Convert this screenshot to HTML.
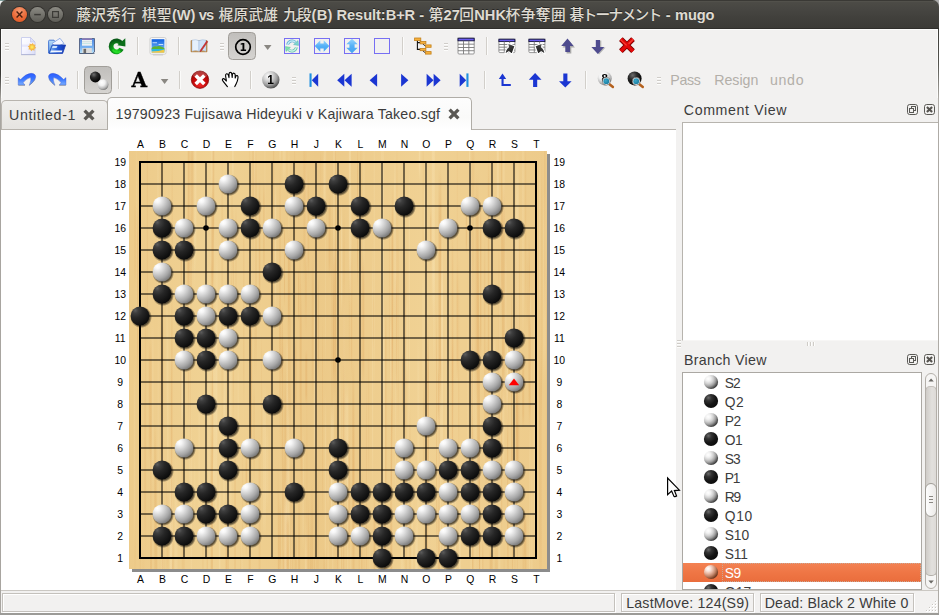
<!DOCTYPE html><html><head><meta charset="utf-8"><title>mugo</title><style>
*{box-sizing:border-box;margin:0;padding:0}
html,body{width:939px;height:615px;overflow:hidden;background:#f2f1f0}
body{font-family:"Liberation Sans","Noto Sans CJK JP",sans-serif;color:#3c3c3c;position:relative}
#win{position:absolute;left:0;top:0;width:939px;height:615px;overflow:hidden;background:#f2f1f0}
.abs{position:absolute}
.t{position:absolute;white-space:nowrap;line-height:1}
#title{position:absolute;left:0;top:0;width:939px;height:29px;background:linear-gradient(#3a3935 0,#3a3935 1px,#55544e 1px,#4c4b46 2.5px,#474642 9px,#403f3b 19px,#3c3b37 27.5px,#2f2e2b 28px,#2f2e2b 29px);border-radius:6.5px 6.5px 0 0}
#title .txt{position:absolute;left:77px;top:6px;font-weight:bold;font-size:15px;color:#dfdbd2;white-space:nowrap;line-height:17px;text-shadow:0 -1px 0 rgba(0,0,0,.5)}
.wb{position:absolute;top:7px;width:15px;height:15px;border-radius:8px}
.sep{position:absolute;width:1px;height:22px;background:#d0cdc9;border-right:0}
.hdl{position:absolute;width:5px;height:9px;background:repeating-linear-gradient(#c8c5c0 0,#c8c5c0 1px,transparent 1px,transparent 3px)}
.ico{position:absolute;width:24px;height:24px;overflow:visible}
.press{position:absolute;width:28px;height:29px;border:1px solid #a6a39d;border-radius:4px;background:linear-gradient(#c9c6c2,#d9d6d2)}
</style></head><body><div id="win"><div class="abs" style="left:0;top:0;width:8px;height:8px;background:linear-gradient(#7f9c9a 0,#7f9c9a 1px,#f4f4f4 1.5px)"></div><div class="abs" style="left:931px;top:0;width:8px;height:8px;background:#a9a9a9"></div><div id="title"><div class="wb" style="left:12px;background:radial-gradient(circle at 50% 25%,#f49a72,#ea6a38 55%,#de5420);box-shadow:0 0 0 1px #33322e"></div><svg class="abs" style="left:12px;top:7px" width="15" height="15"><path d="M4.6 4.6 L10.4 10.4 M10.4 4.6 L4.6 10.4" stroke="#4a1f0e" stroke-width="1.4" fill="none"/></svg><div class="wb" style="left:30px;background:linear-gradient(#8b8a83,#5e5d57);box-shadow:0 0 0 1px #33322e"></div><svg class="abs" style="left:30px;top:7px" width="15" height="15"><path d="M4.2 7.6 H10.8" stroke="#3c3b37" stroke-width="1.5" fill="none"/></svg><div class="wb" style="left:48px;background:linear-gradient(#8b8a83,#5e5d57);box-shadow:0 0 0 1px #33322e"></div><svg class="abs" style="left:48px;top:7px" width="15" height="15"><rect x="4.6" y="4.6" width="5.8" height="5.8" stroke="#3c3b37" stroke-width="1.2" fill="none"/></svg><div id="ttxt"><span class="t tt" id="ts0" style="left:76.30px;top:8.18px;font-size:14.67px;font-weight:500;color:#dfdbd2;letter-spacing:0.320px;text-shadow:0 -1px 0 rgba(0,0,0,.45);">藤沢秀行 </span><span class="t tt" id="ts1" style="left:141.70px;top:8.18px;font-size:14.67px;font-weight:500;color:#dfdbd2;letter-spacing:0.472px;text-shadow:0 -1px 0 rgba(0,0,0,.45);">棋聖</span><span class="t tt" id="ts2" style="left:171.90px;top:7.88px;font-size:14.67px;font-weight:bold;color:#dfdbd2;letter-spacing:-0.105px;text-shadow:0 -1px 0 rgba(0,0,0,.45);">(W) </span><span class="t tt" id="ts3" style="left:198.80px;top:7.88px;font-size:14.67px;font-weight:bold;color:#dfdbd2;letter-spacing:-1.012px;text-shadow:0 -1px 0 rgba(0,0,0,.45);">vs </span><span class="t tt" id="ts4" style="left:218.60px;top:8.18px;font-size:14.67px;font-weight:500;color:#dfdbd2;letter-spacing:0.253px;text-shadow:0 -1px 0 rgba(0,0,0,.45);">梶原武雄 </span><span class="t tt" id="ts5" style="left:283.20px;top:8.18px;font-size:14.67px;font-weight:500;color:#dfdbd2;letter-spacing:-1.028px;text-shadow:0 -1px 0 rgba(0,0,0,.45);">九段</span><span class="t tt" id="ts6" style="left:311.50px;top:7.88px;font-size:14.67px;font-weight:bold;color:#dfdbd2;letter-spacing:0.320px;text-shadow:0 -1px 0 rgba(0,0,0,.45);">(B) </span><span class="t tt" id="ts7" style="left:336.50px;top:7.88px;font-size:14.67px;font-weight:bold;color:#dfdbd2;letter-spacing:-0.078px;text-shadow:0 -1px 0 rgba(0,0,0,.45);">Result:B+R </span><span class="t tt" id="ts8" style="left:419.30px;top:7.88px;font-size:14.67px;font-weight:bold;color:#dfdbd2;letter-spacing:0.000px;text-shadow:0 -1px 0 rgba(0,0,0,.45);">- </span><span class="t tt" id="ts9" style="left:428.70px;top:8.18px;font-size:14.67px;font-weight:500;color:#dfdbd2;letter-spacing:0.000px;text-shadow:0 -1px 0 rgba(0,0,0,.45);">第</span><span class="t tt" id="ts10" style="left:443.50px;top:7.88px;font-size:14.67px;font-weight:bold;color:#dfdbd2;letter-spacing:0.087px;text-shadow:0 -1px 0 rgba(0,0,0,.45);">27</span><span class="t tt" id="ts11" style="left:459.20px;top:8.18px;font-size:14.67px;font-weight:500;color:#dfdbd2;letter-spacing:0.000px;text-shadow:0 -1px 0 rgba(0,0,0,.45);">回</span><span class="t tt" id="ts12" style="left:474.30px;top:7.88px;font-size:14.67px;font-weight:bold;color:#dfdbd2;letter-spacing:-0.033px;text-shadow:0 -1px 0 rgba(0,0,0,.45);">NHK</span><span class="t tt" id="ts13" style="left:505.60px;top:8.18px;font-size:14.67px;font-weight:500;color:#dfdbd2;letter-spacing:0.453px;text-shadow:0 -1px 0 rgba(0,0,0,.45);">杯争奪囲 </span><span class="t tt" id="ts14" style="left:569.50px;top:8.18px;font-size:14.67px;font-weight:500;color:#dfdbd2;letter-spacing:-1.668px;text-shadow:0 -1px 0 rgba(0,0,0,.45);">碁トーナメント </span><span class="t tt" id="ts15" style="left:665.80px;top:7.88px;font-size:14.67px;font-weight:bold;color:#dfdbd2;letter-spacing:0.000px;text-shadow:0 -1px 0 rgba(0,0,0,.45);">- </span><span class="t tt" id="ts16" style="left:675.00px;top:7.88px;font-size:14.67px;font-weight:bold;color:#dfdbd2;letter-spacing:-0.130px;text-shadow:0 -1px 0 rgba(0,0,0,.45);">mugo</span></div></div><div class="abs" style="left:0;top:29px;width:1px;height:586px;background:linear-gradient(#2f2e2b 0,#3a3936 45px,#a8a5a0 70px)"></div><div class="abs" style="left:1px;top:29px;width:1px;height:69px;background:#fbfbfa"></div><div class="abs" style="left:1px;top:29px;width:937px;height:1px;background:#fbfbfa"></div><div class="abs" style="left:937px;top:29px;width:1px;height:69px;background:#fbfbfa"></div><div class="abs" style="left:938px;top:29px;width:1px;height:586px;background:linear-gradient(#3c3b37 0,#55544f 35px,#aeaba6 70px)"></div><div class="abs" style="left:0;top:613px;width:939px;height:2px;background:#9c9b97"></div><svg class="abs" style="left:0;top:0" width="939" height="100" viewBox="0 0 939 100"><defs>
<linearGradient id="prs" x1="0" y1="0" x2="0" y2="1"><stop offset="0" stop-color="#c0bebb"/><stop offset="1" stop-color="#d6d4d1"/></linearGradient>
<linearGradient id="doc" x1="0" y1="0" x2="1" y2="1"><stop offset="0" stop-color="#ffffff"/><stop offset="0.5" stop-color="#f4f4ff"/><stop offset="1" stop-color="#d9dcf7"/></linearGradient>
<radialGradient id="sun" cx="0.5" cy="0.5" r="0.5"><stop offset="0" stop-color="#fff46a"/><stop offset="0.6" stop-color="#fbd24a"/><stop offset="1" stop-color="#f3b64a"/></radialGradient>
<linearGradient id="fold" x1="0" y1="0" x2="1" y2="0"><stop offset="0" stop-color="#8cc0f5"/><stop offset="0.55" stop-color="#1f58d8"/><stop offset="1" stop-color="#1233b0"/></linearGradient>
<linearGradient id="foldb" x1="0" y1="0" x2="0" y2="1"><stop offset="0" stop-color="#b9dcf8"/><stop offset="1" stop-color="#5a98e6"/></linearGradient>
<linearGradient id="flop" x1="0" y1="0" x2="0" y2="1"><stop offset="0" stop-color="#4f86e2"/><stop offset="0.6" stop-color="#78b2f0"/><stop offset="1" stop-color="#bfe6fa"/></linearGradient>
<radialGradient id="grn" cx="0.5" cy="0.85" r="0.9"><stop offset="0" stop-color="#22e022"/><stop offset="0.45" stop-color="#0f9a1a"/><stop offset="1" stop-color="#0a5a18"/></radialGradient>
<linearGradient id="sky" x1="0" y1="0" x2="0" y2="1"><stop offset="0" stop-color="#0f5fe0"/><stop offset="1" stop-color="#8fd0fa"/></linearGradient>
<linearGradient id="larr" x1="0" y1="0" x2="0" y2="1"><stop offset="0" stop-color="#9ad8ff"/><stop offset="0.5" stop-color="#55b0f6"/><stop offset="1" stop-color="#46a4f2"/></linearGradient>
<linearGradient id="cyan" x1="0" y1="0" x2="1" y2="1"><stop offset="0" stop-color="#6ab8f0"/><stop offset="1" stop-color="#4fd8a8"/></linearGradient>
<linearGradient id="undo" x1="0" y1="0" x2="0" y2="1"><stop offset="0" stop-color="#2c5cff"/><stop offset="0.5" stop-color="#3b78ff"/><stop offset="1" stop-color="#7fb2ff"/></linearGradient>
<radialGradient id="redb" cx="0.5" cy="0.75" r="0.8"><stop offset="0" stop-color="#f02a2a"/><stop offset="0.5" stop-color="#c40a0a"/><stop offset="1" stop-color="#8e0000"/></radialGradient>
<radialGradient id="ball" cx="0.36" cy="0.3" r="0.8"><stop offset="0" stop-color="#ffffff"/><stop offset="0.3" stop-color="#d8d8d8"/><stop offset="0.62" stop-color="#a0a0a0"/><stop offset="0.88" stop-color="#555"/><stop offset="1" stop-color="#2a2a2a"/></radialGradient>
<radialGradient id="tbw" cx="0.38" cy="0.3" r="0.75"><stop offset="0" stop-color="#fff"/><stop offset="0.4" stop-color="#f0f0f0"/><stop offset="0.75" stop-color="#b5b5b5"/><stop offset="1" stop-color="#707070"/></radialGradient>
<radialGradient id="tbb" cx="0.36" cy="0.28" r="0.75"><stop offset="0" stop-color="#6e6e6e"/><stop offset="0.4" stop-color="#2a2a2a"/><stop offset="1" stop-color="#000"/></radialGradient>
<radialGradient id="lens" cx="0.4" cy="0.4" r="0.7"><stop offset="0" stop-color="#3aa6c8"/><stop offset="1" stop-color="#177a9e"/></radialGradient>
<linearGradient id="redx" x1="0" y1="0" x2="0" y2="1"><stop offset="0" stop-color="#ff2a2a"/><stop offset="1" stop-color="#c80000"/></linearGradient>
<linearGradient id="curs" x1="0" y1="0" x2="0.6" y2="1"><stop offset="0" stop-color="#7a7a7a"/><stop offset="0.5" stop-color="#3a3a3a"/><stop offset="1" stop-color="#1e1e1e"/></linearGradient>
</defs><rect x="5" y="43" width="4" height="1" fill="#d0cdc9"/><rect x="5" y="44" width="4" height="1" fill="#fdfdfc"/><rect x="5" y="46" width="4" height="1" fill="#d0cdc9"/><rect x="5" y="47" width="4" height="1" fill="#fdfdfc"/><rect x="5" y="49" width="4" height="1" fill="#d0cdc9"/><rect x="5" y="50" width="4" height="1" fill="#fdfdfc"/><path d="M21.5 37.5 H30.5 L35 42 V54.5 H21.5 Z" fill="url(#doc)" stroke="#ccd0ee" stroke-width="1"/><path d="M30.5 37.5 V42 H35 Z" fill="#dfe2fa" stroke="#c2c6ea" stroke-width="0.7"/><rect x="22" y="44.6" width="8" height="2.2" fill="#e2e2fb" opacity=".8"/><rect x="21" y="54" width="14.5" height="1.2" fill="#a0a6c6" opacity=".55"/><polygon points="32.84,42.88 33.67,44.61 35.58,44.71 34.94,46.51 36.22,47.94 34.49,48.77 34.39,50.68 32.59,50.04 31.16,51.32 30.33,49.59 28.42,49.49 29.06,47.69 27.78,46.26 29.51,45.43 29.61,43.52 31.41,44.16" fill="#f3b64a"/><circle cx="32" cy="47.1" r="2.6" fill="url(#sun)"/><path d="M48.6 41.2 Q48.6 40.2 49.6 40.2 H54 L55.2 41.6 H58 V53 H48.6 Z" fill="url(#foldb)" stroke="#3a6ed0" stroke-width="0.9"/><path d="M52 43.5 L60 38.3 L64 43.5 L56 47 Z" fill="#f4f6ff" stroke="#7f9fe0" stroke-width="0.8"/><path d="M52.2 45 H65.6 L62.6 53.4 H49 Z" fill="url(#fold)" stroke="#1a3fb0" stroke-width="0.8"/><path d="M51.2 50.4 H62.4 L61.8 52.3 H50.4 Z" fill="#f2f6ff"/><path d="M52.8 46 H57.5 L56.5 48 H52 Z" fill="#dff0ff" opacity=".9"/><path d="M79.5 38.5 H94.5 V52 L92.5 53.5 H79.5 Z" fill="url(#flop)" stroke="#5a6a8c" stroke-width="1"/><rect x="82" y="38.5" width="10" height="7.2" fill="#eef2f4"/><rect x="82" y="38.5" width="10" height="1.3" fill="#6e5aa8"/><rect x="82" y="41.4" width="10" height="0.8" fill="#c5d8d8"/><rect x="82" y="43" width="10" height="0.8" fill="#bfe4e4"/><rect x="82.3" y="48" width="9.5" height="5" fill="#dcdcdc"/><rect x="83.5" y="48.8" width="2.6" height="4.2" fill="#6a6a6a"/><rect x="79.5" y="53" width="15" height="1" fill="#50607a" opacity=".8"/><path d="M121.2 43.4 A5.5 5.5 0 1 0 121.5 48.8" fill="none" stroke="url(#grn)" stroke-width="4.8"/><path d="M117.4 45.2 L125.4 46.5 L125.3 38.3 Z" fill="#0b6e1a"/><path d="M112.6 49.6 A5.2 5.2 0 0 0 120.3 51.2" fill="none" stroke="#2bea2b" stroke-width="1.8" opacity=".75"/><rect x="137" y="37" width="1" height="18" fill="#d2cfca"/><rect x="138" y="37" width="1" height="18" fill="#fbfbfa"/><rect x="150" y="37.6" width="16" height="16.6" rx="1.5" fill="#fbfbfb" stroke="#cdcdcd" stroke-width="1"/><rect x="151.6" y="39.2" width="12.8" height="13.6" fill="url(#sky)"/><path d="M152.5 42.2 h4.5 v1.1 h-4.5z M158.6 44 h4.6 v1 h-4.6z" fill="#e8f4ff" opacity=".8"/><path d="M151.6 48 Q154 45.4 156.5 46.6 Q159 45.2 161.5 46.8 L164.4 48 V49.4 H151.6 Z" fill="#5cb432"/><path d="M151.6 49 H164.4 V51.4 H151.6 Z" fill="#2cb8dc"/><path d="M151.6 52.8 V51.6 Q158 51.8 164.4 49.6 V52.8 Z" fill="#f4c844"/><rect x="153" y="54.6" width="10" height="0.8" fill="#b0b0b0" opacity=".6"/><rect x="178" y="37" width="1" height="18" fill="#d2cfca"/><rect x="179" y="37" width="1" height="18" fill="#fbfbfa"/><path d="M191 40.6 H207 V51.8 H191 Z" fill="#c98b3c" stroke="#a8702a" stroke-width="0.6"/><path d="M192 40.2 Q195.5 39 199 40.6 V51.2 Q195.5 50 192 51.2 Z" fill="#e6f0fb" stroke="#9bb6d8" stroke-width="0.5"/><path d="M199 40.6 Q202.5 39 206 40.2 V51.2 Q202.5 50 199 51.2 Z" fill="#cfe2f7" stroke="#9bb6d8" stroke-width="0.5"/><path d="M206.8 40.8 L207.8 41.8 L201.4 51 L200 51.8 L200.3 50.2 Z" fill="#d23030" stroke="#a02020" stroke-width="0.4"/><rect x="220" y="43" width="4" height="1" fill="#d0cdc9"/><rect x="220" y="44" width="4" height="1" fill="#fdfdfc"/><rect x="220" y="46" width="4" height="1" fill="#d0cdc9"/><rect x="220" y="47" width="4" height="1" fill="#fdfdfc"/><rect x="220" y="49" width="4" height="1" fill="#d0cdc9"/><rect x="220" y="50" width="4" height="1" fill="#fdfdfc"/><rect x="228.5" y="32.5" width="27" height="27" rx="4" fill="url(#prs)" stroke="#a19e99"/><circle cx="243" cy="47" r="7.3" fill="none" stroke="#000" stroke-width="1.7"/><path d="M263.9 44.9 h7.6 l-3.8 5.2 z" fill="#8a8782"/><rect x="284.5" y="38.5" width="15" height="15" fill="none" stroke="#776ff3" stroke-width="1"/><path d="M287.6 44.8 A4.7 4.7 0 0 1 295.4 42.2" fill="none" stroke="#62aed0" stroke-width="2.8"/><path d="M287.6 44.8 A4.7 4.7 0 0 1 295.4 42.2" fill="none" stroke="#c4ecf8" stroke-width="1.4"/><path d="M293.6 44.6 L298.5 45.4 L298 40.6 Z" fill="#7fd6d0" stroke="#4fb0b0" stroke-width="0.5"/><path d="M296.4 47.2 A4.7 4.7 0 0 1 288.6 49.8" fill="none" stroke="#62c0b0" stroke-width="2.8"/><path d="M296.4 47.2 A4.7 4.7 0 0 1 288.6 49.8" fill="none" stroke="#ccf4e6" stroke-width="1.4"/><path d="M290.4 47.4 L285.5 46.6 L286 51.4 Z" fill="#7fe2b0" stroke="#4fc090" stroke-width="0.5"/><rect x="314.5" y="38.5" width="15" height="15" fill="none" stroke="#776ff3" stroke-width="1"/><path d="M314.7 46 L320.3 40.3 V43.4 H323.7 V40.3 L329.3 46 L323.7 51.7 V48.6 H320.3 V51.7 Z" fill="url(#larr)"/><rect x="344.5" y="38.5" width="15" height="15" fill="none" stroke="#776ff3" stroke-width="1"/><path d="M352 38.7 L357.7 44.3 H354.6 V47.7 H357.7 L352 53.3 L346.3 47.7 H349.4 V44.3 H346.3 Z" fill="url(#larr)"/><rect x="374.5" y="38.5" width="15" height="15" fill="none" stroke="#776ff3" stroke-width="1"/><rect x="402" y="37" width="1" height="18" fill="#d2cfca"/><rect x="403" y="37" width="1" height="18" fill="#fbfbfa"/><path d="M417.4 40.5 V49.4 H420.2 M417.4 42.6 H420.2" fill="none" stroke="#111" stroke-width="1.1"/><path d="M422.8 44 L425.6 46.2 M422.8 50.8 L425.6 53" fill="none" stroke="#333" stroke-width="1"/><rect x="414.6" y="38.0" width="6.2" height="2.6" fill="#f7b03a" stroke="#c2811c" stroke-width="0.8"/><rect x="420.1" y="41.5" width="5.8" height="2.4" fill="#f7b03a" stroke="#c2811c" stroke-width="0.8"/><rect x="425.5" y="44.9" width="5.6" height="2.4" fill="#f7b03a" stroke="#c2811c" stroke-width="0.8"/><rect x="420.1" y="48.4" width="5.8" height="2.3" fill="#f7b03a" stroke="#c2811c" stroke-width="0.8"/><rect x="425.5" y="51.6" width="5.6" height="2.5" fill="#f7b03a" stroke="#c2811c" stroke-width="0.8"/><rect x="444" y="43" width="4" height="1" fill="#d0cdc9"/><rect x="444" y="44" width="4" height="1" fill="#fdfdfc"/><rect x="444" y="46" width="4" height="1" fill="#d0cdc9"/><rect x="444" y="47" width="4" height="1" fill="#fdfdfc"/><rect x="444" y="49" width="4" height="1" fill="#d0cdc9"/><rect x="444" y="50" width="4" height="1" fill="#fdfdfc"/><rect x="458.0" y="38.2" width="16.2" height="15.8" rx="1" fill="#fff" stroke="#8c8c8c" stroke-width="0.9"/><rect x="458.0" y="38.2" width="16.2" height="2.6" fill="#6a5cf0" stroke="#14143a" stroke-width="0.9"/><rect x="458.0" y="43.7" width="16.2" height="0.9" fill="#7a7a7a"/><rect x="458.0" y="47.0" width="16.2" height="0.9" fill="#7a7a7a"/><rect x="458.0" y="50.3" width="16.2" height="0.9" fill="#7a7a7a"/><rect x="463.0" y="40.8" width="0.9" height="13.2" fill="#7a7a7a"/><rect x="468.4" y="40.8" width="0.9" height="13.2" fill="#7a7a7a"/><rect x="486" y="37" width="1" height="18" fill="#d2cfca"/><rect x="487" y="37" width="1" height="18" fill="#fbfbfa"/><rect x="498.9" y="39.2" width="16.0" height="13.4" rx="1" fill="#fff" stroke="#8c8c8c" stroke-width="0.9"/><rect x="498.9" y="39.2" width="16.0" height="2.4" fill="#6a5cf0" stroke="#14143a" stroke-width="0.9"/><rect x="498.9" y="44.0" width="16.0" height="0.9" fill="#7a7a7a"/><rect x="498.9" y="46.7" width="16.0" height="0.9" fill="#7a7a7a"/><rect x="498.9" y="49.5" width="16.0" height="0.9" fill="#7a7a7a"/><rect x="503.8" y="41.6" width="0.9" height="11.0" fill="#7a7a7a"/><rect x="509.2" y="41.6" width="0.9" height="11.0" fill="#7a7a7a"/><path d="M507.6 42.9 L515 46 L512 54.2 L508.8 51.8 L505 54.2 Q505.2 49.4 508.4 47 Z" fill="url(#curs)" stroke="#fff" stroke-width="1.1" stroke-linejoin="round"/><rect x="528.9" y="39.2" width="16.0" height="13.4" rx="1" fill="#fff" stroke="#8c8c8c" stroke-width="0.9"/><rect x="528.9" y="39.2" width="16.0" height="2.4" fill="#6a5cf0" stroke="#14143a" stroke-width="0.9"/><rect x="528.9" y="44.0" width="16.0" height="0.9" fill="#7a7a7a"/><rect x="528.9" y="46.7" width="16.0" height="0.9" fill="#7a7a7a"/><rect x="528.9" y="49.5" width="16.0" height="0.9" fill="#7a7a7a"/><rect x="533.8" y="41.6" width="0.9" height="11.0" fill="#7a7a7a"/><rect x="539.2" y="41.6" width="0.9" height="11.0" fill="#7a7a7a"/><g transform="translate(1050.0,0) scale(-1,1)"><path d="M507.6 42.9 L515 46 L512 54.2 L508.8 51.8 L505 54.2 Q505.2 49.4 508.4 47 Z" fill="url(#curs)" stroke="#fff" stroke-width="1.1" stroke-linejoin="round"/></g><path d="M567.5 38.6 L573.6 46 H570 V52 H565.3 V46 H561.2 Z" fill="#a9a9a9" transform="translate(1.3,1.6)"/><path d="M567.5 38.6 L573.6 46 H570 V52 H565.3 V46 H561.2 Z" fill="#4e4b8e"/><path d="M595.8 40 H600 V47 H604.2 L597.8 54 L591.4 47 H595.8 Z" fill="#b5b5b5" transform="translate(1.3,0.6)"/><path d="M595.8 40 H600 V47 H604.2 L597.8 54 L591.4 47 H595.8 Z" fill="#4e4b8e"/><path d="M620.9 39.1 L633 51.2 M633 39.1 L620.9 51.2" stroke="#7c0000" stroke-width="5.2" fill="none"/><path d="M620.9 39.1 L633 51.2 M633 39.1 L620.9 51.2" stroke="#e30a0a" stroke-width="3.6" fill="none"/><path d="M620.6 39.6 L626.6 45.4 M633.2 39.4 L628.6 43.8" stroke="#ff5a4a" stroke-width="1.2" fill="none" opacity=".7"/><rect x="5" y="77" width="4" height="1" fill="#d0cdc9"/><rect x="5" y="78" width="4" height="1" fill="#fdfdfc"/><rect x="5" y="80" width="4" height="1" fill="#d0cdc9"/><rect x="5" y="81" width="4" height="1" fill="#fdfdfc"/><rect x="5" y="83" width="4" height="1" fill="#d0cdc9"/><rect x="5" y="84" width="4" height="1" fill="#fdfdfc"/><path d="M18.2 77.6 L18.2 85 L25 85 L23 82.7 Q27 78.2 30.6 77.6 Q31.6 80 29.2 85.3 Q36.2 80 35.7 76 Q34.6 73.1 31 73.3 Q25.6 73.9 20.6 79.5 Z" fill="url(#undo)" stroke="#3450c8" stroke-width="0.5" stroke-opacity=".7"/><path d="M18.4 85.4 H25 M29.4 85.4 Q33 82.6 35 79.4" fill="none" stroke="#50607a" stroke-width="0.8" opacity=".55"/><g transform="translate(84.2,0) scale(-1,1)"><path d="M18.2 77.6 L18.2 85 L25 85 L23 82.7 Q27 78.2 30.6 77.6 Q31.6 80 29.2 85.3 Q36.2 80 35.7 76 Q34.6 73.1 31 73.3 Q25.6 73.9 20.6 79.5 Z" fill="url(#undo)" stroke="#3450c8" stroke-width="0.5" stroke-opacity=".7"/><path d="M18.4 85.4 H25 M29.4 85.4 Q33 82.6 35 79.4" fill="none" stroke="#50607a" stroke-width="0.8" opacity=".55"/></g><rect x="77" y="71" width="1" height="18" fill="#d2cfca"/><rect x="78" y="71" width="1" height="18" fill="#fbfbfa"/><rect x="84.5" y="66.5" width="27" height="27" rx="4" fill="url(#prs)" stroke="#a19e99"/><circle cx="95.3" cy="77" r="5.4" fill="url(#tbb)"/><circle cx="103.1" cy="84.6" r="5.4" fill="url(#tbw)"/><rect x="118" y="71" width="1" height="18" fill="#d2cfca"/><rect x="119" y="71" width="1" height="18" fill="#fbfbfa"/><path d="M160.8 78.9 h7.6 l-3.8 5.2 z" fill="#8a8782"/><rect x="179" y="71" width="1" height="18" fill="#d2cfca"/><rect x="180" y="71" width="1" height="18" fill="#fbfbfa"/><circle cx="200" cy="79.7" r="8.7" fill="url(#redb)" stroke="#7e0000" stroke-width="0.7"/><path d="M192.6 76 A8.2 8.2 0 0 1 207.4 76 Q200 79.4 192.6 76Z" fill="#fff" opacity=".22"/><path d="M195.7 75.4 L204.3 84 M204.3 75.4 L195.7 84" stroke="#fff" stroke-width="3.5" stroke-linecap="butt"/><path d="M227.4 86.6 L223.2 81.4 Q221.8 79.8 222.6 79 Q223.6 78.2 225 79.6 L226.4 81 L225.6 76 Q225.4 74.2 226.6 73.8 Q227.8 73.6 228.4 75.2 L229 77.6 L229 74 Q229.2 72.4 230.4 72.4 Q231.6 72.4 231.8 74 L232.2 77.4 L232.4 74.4 Q232.8 73 234 73.2 Q235.2 73.6 235.2 75 L235.2 78 L235.8 76.2 Q236.4 75.2 237.4 75.6 Q238.2 76.2 238 77.8 Q237.6 81.4 236.2 83.8 L234.8 86.6 Z" fill="#fff" stroke="none"/><path d="M227.4 86.6 L223.2 81.4 Q221.8 79.8 222.6 79 Q223.6 78.2 225 79.6 L226.4 81 L225.6 76 Q225.4 74.2 226.6 73.8 Q227.8 73.6 228.4 75.2 L229 77.6 L229 74 Q229.2 72.4 230.4 72.4 Q231.6 72.4 231.8 74 L232.2 77.4 L232.4 74.4 Q232.8 73 234 73.2 Q235.2 73.6 235.2 75 L235.2 78 L235.8 76.2 Q236.4 75.2 237.4 75.6 Q238.2 76.2 238 77.8 Q237.6 81.4 236.2 83.8 L234.8 86.6" fill="none" stroke="#000" stroke-width="1.15" stroke-linejoin="round" stroke-linecap="round"/><rect x="250" y="71" width="1" height="18" fill="#d2cfca"/><rect x="251" y="71" width="1" height="18" fill="#fbfbfa"/><circle cx="270.8" cy="79.8" r="8.7" fill="url(#ball)"/><rect x="292" y="77" width="4" height="1" fill="#d0cdc9"/><rect x="292" y="78" width="4" height="1" fill="#fdfdfc"/><rect x="292" y="80" width="4" height="1" fill="#d0cdc9"/><rect x="292" y="81" width="4" height="1" fill="#fdfdfc"/><rect x="292" y="83" width="4" height="1" fill="#d0cdc9"/><rect x="292" y="84" width="4" height="1" fill="#fdfdfc"/><rect x="309.5" y="73.4" width="2.1" height="13.5" fill="#1f8fe0"/><path d="M311.8 80.3 L318.2 73.8 V86.8 Z" fill="#1b36d2"/><path d="M337.2 80.3 L344.3 73.8 V86.8 Z" fill="#1b36d2"/><path d="M344.5 80.3 L351.6 73.8 V86.8 Z" fill="#1b36d2"/><path d="M369.6 80.3 L377.1 73.8 V86.8 Z" fill="#1b36d2"/><path d="M408.4 80.3 L401.1 73.8 V86.8 Z" fill="#1b36d2"/><path d="M433.5 80.3 L426.6 73.8 V86.8 Z" fill="#1b36d2"/><path d="M440.6 80.3 L433.6 73.8 V86.8 Z" fill="#1b36d2"/><path d="M466.2 80.3 L459.7 73.8 V86.8 Z" fill="#1b36d2"/><rect x="466.4" y="73.4" width="2.1" height="13.5" fill="#1f8fe0"/><rect x="484" y="71" width="1" height="18" fill="#d2cfca"/><rect x="485" y="71" width="1" height="18" fill="#fbfbfa"/><path d="M502.5 73.4 L506.2 79 H503.6 V84 H510.8 V86.1 H501.5 V79 H498.8 Z" fill="#1b36d2"/><path d="M535.1 73 L541.5 79.8 H537.2 V87 H533.1 V79.8 H528.8 Z" fill="#1b36d2"/><path d="M563.3 73.4 H567.4 V81.2 H571.6 L565.3 87.6 L559 81.2 H563.3 Z" fill="#1b36d2"/><rect x="585" y="71" width="1" height="18" fill="#d2cfca"/><rect x="586" y="71" width="1" height="18" fill="#fbfbfa"/><circle cx="604.7" cy="78.4" r="7" fill="url(#tbw)"/><circle cx="634.6" cy="78.4" r="7" fill="url(#tbb)"/><path d="M639.4 84.2 L642.8 87.0" stroke="#b4601c" stroke-width="2.5" stroke-linecap="round"/><circle cx="636.2" cy="81.2" r="3.9" fill="#fff" stroke="#444" stroke-width="0.6"/><circle cx="636.2" cy="81.2" r="2.9" fill="url(#lens)"/><rect x="657" y="77" width="4" height="1" fill="#d0cdc9"/><rect x="657" y="78" width="4" height="1" fill="#fdfdfc"/><rect x="657" y="80" width="4" height="1" fill="#d0cdc9"/><rect x="657" y="81" width="4" height="1" fill="#fdfdfc"/><rect x="657" y="83" width="4" height="1" fill="#d0cdc9"/><rect x="657" y="84" width="4" height="1" fill="#fdfdfc"/></svg><div class="t" id="pass" style="left:670.30px;top:72.78px;font-size:14.2px;font-weight:normal;color:#b3afa9;letter-spacing:-0.316px;">Pass</div><div class="t" id="resign" style="left:714.20px;top:72.78px;font-size:14.2px;font-weight:normal;color:#b3afa9;letter-spacing:0.006px;">Resign</div><div class="t" id="undo" style="left:769.90px;top:72.78px;font-size:14.2px;font-weight:normal;color:#b3afa9;letter-spacing:0.713px;">undo</div><div class="abs" style="left:1px;top:100px;width:107px;height:29px;border:1px solid #b8b4ae;border-bottom:0;border-radius:5px 5px 0 0;background:linear-gradient(#f0efed,#e6e4e1)"></div><div class="abs" style="left:1px;top:129px;width:675px;height:1px;background:#b8b4ae"></div><div class="abs" style="left:107px;top:97px;width:365px;height:33px;border:1px solid #b0ada7;border-bottom:0;border-radius:5px 5px 0 0;background:linear-gradient(#fdfdfd,#fafaf9 60%,#ffffff)"></div><div class="t" id="tab1" style="left:9.00px;top:108.38px;font-size:14.2px;font-weight:normal;color:#3c3c3c;letter-spacing:0.630px;">Untitled-1</div><div class="t" id="tab2" style="left:115.60px;top:107.18px;font-size:14.2px;font-weight:normal;color:#3c3c3c;letter-spacing:0.200px;">19790923 Fujisawa Hideyuki v Kajiwara Takeo.sgf</div><svg class="abs" style="left:82px;top:108px" width="14" height="14"><path d="M2.6 2.6 L11.4 11.4 M11.4 2.6 L2.6 11.4" stroke="#5a5854" stroke-width="3.3" fill="none"/></svg><svg class="abs" style="left:447px;top:107px" width="14" height="14"><path d="M2.6 2.6 L11.4 11.4 M11.4 2.6 L2.6 11.4" stroke="#5a5854" stroke-width="3.3" fill="none"/></svg><div class="abs" style="left:1px;top:130px;width:675px;height:460px;background:#fff"></div><div class="abs" style="left:132px;top:154px;width:418px;height:418px;background:#8c8c8c"></div><svg class="abs" id="wood" style="left:129px;top:151px" width="418" height="418" viewBox="0 0 418 418"><defs><linearGradient id="wv" x1="0" y1="0" x2="0" y2="1"><stop offset="0" stop-color="#dca35a" stop-opacity="0"/><stop offset="0.2" stop-color="#dca35a" stop-opacity="1"/><stop offset="0.8" stop-color="#dca35a" stop-opacity="1"/><stop offset="1" stop-color="#dca35a" stop-opacity="0"/></linearGradient><linearGradient id="wl" x1="0" y1="0" x2="0" y2="1"><stop offset="0" stop-color="#fbe7b8" stop-opacity="0"/><stop offset="0.2" stop-color="#fbe7b8" stop-opacity="1"/><stop offset="0.8" stop-color="#fbe7b8" stop-opacity="1"/><stop offset="1" stop-color="#fbe7b8" stop-opacity="0"/></linearGradient><linearGradient id="wb" x1="0" y1="0" x2="1" y2="0"><stop offset="0" stop-color="#edcb8a"/><stop offset="0.2" stop-color="#f0d294"/><stop offset="0.45" stop-color="#ecc988"/><stop offset="0.7" stop-color="#f0d193"/><stop offset="1" stop-color="#edcb8b"/></linearGradient></defs><rect width="418" height="418" fill="url(#wb)"/><rect x="135.4" y="-38" width="1" height="149" fill="url(#wl)" opacity="0.14"/><rect x="243.6" y="139" width="1.5" height="59" fill="url(#wv)" opacity="0.12"/><rect x="177.4" y="229" width="1" height="287" fill="url(#wv)" opacity="0.11"/><rect x="244.8" y="-39" width="1" height="294" fill="url(#wl)" opacity="0.19"/><rect x="60.3" y="197" width="1" height="193" fill="url(#wl)" opacity="0.14"/><rect x="238.8" y="191" width="1.5" height="143" fill="url(#wv)" opacity="0.11"/><rect x="86.1" y="153" width="2" height="244" fill="url(#wl)" opacity="0.20"/><rect x="103.8" y="52" width="1" height="225" fill="url(#wv)" opacity="0.22"/><rect x="365.8" y="389" width="3" height="122" fill="url(#wv)" opacity="0.19"/><rect x="316.5" y="133" width="1" height="283" fill="url(#wl)" opacity="0.14"/><rect x="233.3" y="100" width="2" height="135" fill="url(#wv)" opacity="0.28"/><rect x="28.7" y="157" width="1" height="286" fill="url(#wl)" opacity="0.13"/><rect x="293.2" y="117" width="3" height="121" fill="url(#wl)" opacity="0.13"/><rect x="193.0" y="166" width="1" height="203" fill="url(#wv)" opacity="0.16"/><rect x="308.6" y="339" width="2" height="148" fill="url(#wv)" opacity="0.20"/><rect x="229.7" y="336" width="1" height="255" fill="url(#wv)" opacity="0.19"/><rect x="150.0" y="9" width="2" height="289" fill="url(#wv)" opacity="0.15"/><rect x="97.5" y="24" width="3" height="258" fill="url(#wv)" opacity="0.13"/><rect x="223.5" y="256" width="2" height="288" fill="url(#wv)" opacity="0.24"/><rect x="282.7" y="339" width="1" height="164" fill="url(#wl)" opacity="0.28"/><rect x="233.8" y="-13" width="2" height="150" fill="url(#wl)" opacity="0.13"/><rect x="28.2" y="-10" width="1.5" height="160" fill="url(#wl)" opacity="0.14"/><rect x="236.9" y="221" width="1" height="287" fill="url(#wv)" opacity="0.15"/><rect x="157.3" y="216" width="1.5" height="289" fill="url(#wv)" opacity="0.13"/><rect x="204.0" y="83" width="3" height="170" fill="url(#wv)" opacity="0.26"/><rect x="309.5" y="14" width="3" height="257" fill="url(#wv)" opacity="0.31"/><rect x="220.8" y="359" width="1" height="223" fill="url(#wl)" opacity="0.19"/><rect x="268.7" y="60" width="1" height="224" fill="url(#wv)" opacity="0.14"/><rect x="322.7" y="221" width="2" height="209" fill="url(#wl)" opacity="0.29"/><rect x="81.6" y="279" width="1.5" height="255" fill="url(#wv)" opacity="0.21"/><rect x="148.6" y="302" width="1" height="297" fill="url(#wv)" opacity="0.14"/><rect x="252.9" y="369" width="2" height="162" fill="url(#wl)" opacity="0.34"/><rect x="152.4" y="155" width="1.5" height="76" fill="url(#wv)" opacity="0.21"/><rect x="411.8" y="239" width="1" height="170" fill="url(#wl)" opacity="0.14"/><rect x="276.1" y="284" width="2" height="246" fill="url(#wv)" opacity="0.14"/><rect x="329.9" y="373" width="2" height="72" fill="url(#wl)" opacity="0.23"/><rect x="310.7" y="18" width="1" height="231" fill="url(#wv)" opacity="0.13"/><rect x="378.2" y="213" width="1" height="203" fill="url(#wv)" opacity="0.31"/><rect x="65.2" y="306" width="1" height="55" fill="url(#wl)" opacity="0.14"/><rect x="313.3" y="339" width="1" height="158" fill="url(#wl)" opacity="0.17"/><rect x="105.3" y="290" width="1.5" height="175" fill="url(#wv)" opacity="0.22"/><rect x="348.7" y="102" width="1" height="278" fill="url(#wv)" opacity="0.23"/><rect x="378.0" y="342" width="2" height="257" fill="url(#wv)" opacity="0.13"/><rect x="213.4" y="219" width="3" height="244" fill="url(#wl)" opacity="0.15"/><rect x="59.2" y="89" width="1" height="189" fill="url(#wv)" opacity="0.22"/><rect x="327.8" y="-34" width="1" height="271" fill="url(#wv)" opacity="0.11"/><rect x="40.9" y="288" width="3" height="190" fill="url(#wl)" opacity="0.22"/><rect x="256.0" y="147" width="1.5" height="223" fill="url(#wv)" opacity="0.21"/><rect x="393.5" y="349" width="1.5" height="281" fill="url(#wv)" opacity="0.20"/><rect x="174.2" y="-27" width="2" height="161" fill="url(#wv)" opacity="0.12"/><rect x="279.8" y="11" width="1" height="274" fill="url(#wl)" opacity="0.27"/><rect x="59.8" y="41" width="1" height="292" fill="url(#wl)" opacity="0.21"/><rect x="203.7" y="138" width="1.5" height="90" fill="url(#wv)" opacity="0.17"/><rect x="81.8" y="108" width="2" height="73" fill="url(#wv)" opacity="0.20"/><rect x="293.9" y="226" width="2" height="133" fill="url(#wv)" opacity="0.11"/><rect x="411.8" y="-12" width="1.5" height="293" fill="url(#wv)" opacity="0.11"/><rect x="325.6" y="315" width="1.5" height="239" fill="url(#wl)" opacity="0.28"/><rect x="395.4" y="361" width="2" height="87" fill="url(#wv)" opacity="0.25"/><rect x="37.4" y="24" width="1" height="250" fill="url(#wl)" opacity="0.18"/><rect x="7.0" y="-22" width="1" height="250" fill="url(#wl)" opacity="0.14"/><rect x="360.6" y="395" width="3" height="53" fill="url(#wv)" opacity="0.30"/><rect x="259.9" y="49" width="1" height="182" fill="url(#wv)" opacity="0.14"/><rect x="21.1" y="228" width="1.5" height="283" fill="url(#wv)" opacity="0.15"/><rect x="186.3" y="308" width="1" height="118" fill="url(#wl)" opacity="0.13"/><rect x="7.7" y="53" width="1.5" height="179" fill="url(#wv)" opacity="0.24"/><rect x="271.7" y="347" width="3" height="186" fill="url(#wl)" opacity="0.19"/><rect x="89.9" y="321" width="1.5" height="136" fill="url(#wl)" opacity="0.27"/><rect x="169.2" y="323" width="2" height="295" fill="url(#wv)" opacity="0.24"/><rect x="367.8" y="-21" width="2" height="91" fill="url(#wl)" opacity="0.32"/><rect x="280.3" y="257" width="1.5" height="200" fill="url(#wv)" opacity="0.14"/><rect x="112.5" y="380" width="1" height="116" fill="url(#wl)" opacity="0.25"/><rect x="102.2" y="24" width="1.5" height="104" fill="url(#wv)" opacity="0.12"/><rect x="116.6" y="296" width="1.5" height="112" fill="url(#wv)" opacity="0.28"/><rect x="60.1" y="77" width="1" height="148" fill="url(#wl)" opacity="0.14"/><rect x="400.3" y="268" width="1" height="214" fill="url(#wl)" opacity="0.21"/><rect x="136.3" y="272" width="3" height="87" fill="url(#wl)" opacity="0.13"/><rect x="349.2" y="312" width="2" height="233" fill="url(#wv)" opacity="0.22"/><rect x="210.8" y="208" width="1" height="257" fill="url(#wl)" opacity="0.28"/><rect x="289.8" y="-41" width="1.5" height="71" fill="url(#wl)" opacity="0.34"/><rect x="157.4" y="228" width="3" height="190" fill="url(#wl)" opacity="0.28"/><rect x="204.5" y="-28" width="1" height="164" fill="url(#wl)" opacity="0.33"/><rect x="38.4" y="157" width="1" height="236" fill="url(#wl)" opacity="0.31"/><rect x="98.1" y="238" width="1.5" height="108" fill="url(#wv)" opacity="0.29"/><rect x="32.1" y="223" width="1.5" height="242" fill="url(#wl)" opacity="0.14"/><rect x="61.6" y="257" width="1.5" height="213" fill="url(#wl)" opacity="0.15"/><rect x="201.7" y="248" width="3" height="117" fill="url(#wl)" opacity="0.28"/><rect x="121.6" y="154" width="1.5" height="166" fill="url(#wv)" opacity="0.30"/><rect x="83.3" y="-52" width="1" height="284" fill="url(#wv)" opacity="0.28"/><rect x="404.7" y="117" width="3" height="298" fill="url(#wl)" opacity="0.33"/><rect x="31.2" y="180" width="1" height="85" fill="url(#wl)" opacity="0.15"/><rect x="342.9" y="262" width="1.5" height="272" fill="url(#wv)" opacity="0.30"/><rect x="203.2" y="375" width="1" height="90" fill="url(#wl)" opacity="0.21"/><rect x="304.0" y="85" width="2" height="136" fill="url(#wl)" opacity="0.12"/><rect x="313.8" y="364" width="2" height="80" fill="url(#wl)" opacity="0.33"/><rect x="121.2" y="119" width="2" height="66" fill="url(#wl)" opacity="0.14"/><rect x="386.8" y="69" width="1.5" height="264" fill="url(#wv)" opacity="0.25"/><rect x="265.4" y="62" width="1" height="112" fill="url(#wv)" opacity="0.14"/><rect x="156.1" y="312" width="2" height="271" fill="url(#wl)" opacity="0.33"/><rect x="393.2" y="-37" width="1.5" height="230" fill="url(#wl)" opacity="0.22"/><rect x="314.6" y="358" width="1.5" height="171" fill="url(#wv)" opacity="0.14"/><rect x="173.4" y="278" width="1.5" height="124" fill="url(#wl)" opacity="0.18"/><rect x="274.2" y="246" width="1.5" height="171" fill="url(#wv)" opacity="0.24"/><rect x="31.4" y="147" width="3" height="188" fill="url(#wv)" opacity="0.27"/><rect x="178.7" y="20" width="1.5" height="111" fill="url(#wv)" opacity="0.17"/><rect x="154.0" y="283" width="1.5" height="272" fill="url(#wv)" opacity="0.19"/><rect x="219.1" y="284" width="2" height="118" fill="url(#wv)" opacity="0.23"/><rect x="150.5" y="351" width="1.5" height="73" fill="url(#wv)" opacity="0.24"/><rect x="180.5" y="340" width="1.5" height="262" fill="url(#wv)" opacity="0.11"/><rect x="296.6" y="164" width="3" height="292" fill="url(#wv)" opacity="0.30"/><rect x="388.0" y="54" width="3" height="293" fill="url(#wv)" opacity="0.13"/><rect x="218.3" y="271" width="1" height="285" fill="url(#wl)" opacity="0.30"/><rect x="191.2" y="-2" width="1" height="50" fill="url(#wv)" opacity="0.11"/><rect x="298.9" y="182" width="1" height="207" fill="url(#wv)" opacity="0.27"/><rect x="41.6" y="207" width="1.5" height="181" fill="url(#wv)" opacity="0.15"/><rect x="251.2" y="396" width="1" height="184" fill="url(#wv)" opacity="0.17"/><rect x="350.9" y="48" width="1.5" height="169" fill="url(#wv)" opacity="0.31"/><rect x="294.5" y="29" width="1.5" height="64" fill="url(#wl)" opacity="0.27"/><rect x="33.9" y="364" width="1.5" height="217" fill="url(#wv)" opacity="0.11"/><rect x="141.3" y="122" width="2" height="141" fill="url(#wv)" opacity="0.16"/><rect x="353.3" y="384" width="1" height="101" fill="url(#wv)" opacity="0.28"/><rect x="96.5" y="347" width="1.5" height="116" fill="url(#wv)" opacity="0.24"/><rect x="255.0" y="357" width="1.5" height="171" fill="url(#wv)" opacity="0.23"/><rect x="385.4" y="386" width="1" height="103" fill="url(#wv)" opacity="0.11"/><rect x="25.1" y="266" width="2" height="162" fill="url(#wv)" opacity="0.12"/><rect x="33.2" y="25" width="1" height="132" fill="url(#wl)" opacity="0.29"/><rect x="13.3" y="391" width="2" height="260" fill="url(#wv)" opacity="0.12"/><rect x="32.7" y="378" width="1" height="138" fill="url(#wv)" opacity="0.31"/><rect x="86.7" y="81" width="2" height="242" fill="url(#wl)" opacity="0.14"/><rect x="294.8" y="361" width="1.5" height="143" fill="url(#wv)" opacity="0.18"/><rect x="374.9" y="54" width="1" height="208" fill="url(#wl)" opacity="0.21"/><rect x="157.0" y="361" width="3" height="66" fill="url(#wv)" opacity="0.26"/><rect x="375.6" y="93" width="2" height="141" fill="url(#wl)" opacity="0.13"/><rect x="312.0" y="76" width="2" height="281" fill="url(#wl)" opacity="0.26"/><rect x="336.8" y="47" width="1" height="56" fill="url(#wv)" opacity="0.31"/><rect x="398.7" y="358" width="2" height="247" fill="url(#wl)" opacity="0.15"/><rect x="207.6" y="278" width="1" height="251" fill="url(#wl)" opacity="0.30"/><rect x="253.8" y="151" width="2" height="265" fill="url(#wl)" opacity="0.26"/><rect x="214.0" y="53" width="2" height="238" fill="url(#wv)" opacity="0.11"/><rect x="231.0" y="135" width="2" height="90" fill="url(#wv)" opacity="0.12"/><rect x="261.1" y="168" width="1.5" height="74" fill="url(#wl)" opacity="0.22"/><rect x="97.9" y="348" width="2" height="165" fill="url(#wv)" opacity="0.22"/><rect x="323.5" y="75" width="1" height="245" fill="url(#wv)" opacity="0.16"/><rect x="106.2" y="53" width="1.5" height="100" fill="url(#wv)" opacity="0.13"/><rect x="369.6" y="121" width="1.5" height="132" fill="url(#wl)" opacity="0.24"/><rect x="96.7" y="394" width="1" height="213" fill="url(#wv)" opacity="0.20"/><rect x="342.4" y="-42" width="3" height="279" fill="url(#wv)" opacity="0.13"/><rect x="79.2" y="110" width="1.5" height="283" fill="url(#wl)" opacity="0.22"/><rect x="108.7" y="213" width="1" height="76" fill="url(#wl)" opacity="0.17"/><rect x="154.1" y="398" width="1" height="61" fill="url(#wv)" opacity="0.26"/><rect x="382.0" y="127" width="1" height="255" fill="url(#wv)" opacity="0.24"/><rect x="32.6" y="191" width="1" height="249" fill="url(#wv)" opacity="0.12"/><rect x="165.2" y="-18" width="1" height="210" fill="url(#wv)" opacity="0.25"/><rect x="171.3" y="131" width="1.5" height="217" fill="url(#wv)" opacity="0.26"/><rect x="369.4" y="336" width="2" height="154" fill="url(#wl)" opacity="0.20"/><rect x="82.4" y="-57" width="2" height="101" fill="url(#wl)" opacity="0.22"/><rect x="342.9" y="107" width="2" height="194" fill="url(#wl)" opacity="0.15"/><rect x="21.6" y="357" width="1" height="210" fill="url(#wv)" opacity="0.24"/><rect x="155.0" y="70" width="1" height="86" fill="url(#wv)" opacity="0.30"/><rect x="45.5" y="303" width="3" height="238" fill="url(#wl)" opacity="0.19"/><rect x="350.0" y="161" width="1" height="294" fill="url(#wv)" opacity="0.30"/><rect x="162.1" y="332" width="1" height="210" fill="url(#wl)" opacity="0.26"/><rect x="82.0" y="40" width="3" height="96" fill="url(#wv)" opacity="0.21"/><rect x="160.3" y="385" width="1" height="87" fill="url(#wl)" opacity="0.16"/><rect x="369.5" y="88" width="1" height="217" fill="url(#wv)" opacity="0.20"/><rect x="354.9" y="81" width="1.5" height="212" fill="url(#wv)" opacity="0.19"/><rect x="153.6" y="-58" width="3" height="95" fill="url(#wl)" opacity="0.23"/><rect x="186.8" y="311" width="3" height="259" fill="url(#wv)" opacity="0.11"/><rect x="149.9" y="142" width="2" height="73" fill="url(#wv)" opacity="0.11"/><rect x="266.0" y="84" width="1" height="281" fill="url(#wl)" opacity="0.14"/><rect x="314.4" y="299" width="2" height="213" fill="url(#wv)" opacity="0.11"/><rect x="256.7" y="390" width="1" height="98" fill="url(#wv)" opacity="0.31"/><rect x="382.9" y="270" width="1" height="222" fill="url(#wv)" opacity="0.28"/><rect x="255.2" y="351" width="1.5" height="90" fill="url(#wv)" opacity="0.28"/><rect x="60.0" y="60" width="3" height="102" fill="url(#wv)" opacity="0.17"/><rect x="15.4" y="232" width="1" height="151" fill="url(#wv)" opacity="0.17"/><rect x="157.5" y="183" width="1.5" height="79" fill="url(#wl)" opacity="0.20"/><rect x="364.9" y="185" width="1" height="113" fill="url(#wl)" opacity="0.29"/><rect x="155.3" y="204" width="2" height="298" fill="url(#wv)" opacity="0.27"/><rect x="184.9" y="379" width="1" height="204" fill="url(#wv)" opacity="0.21"/><rect x="129.6" y="282" width="2" height="233" fill="url(#wv)" opacity="0.16"/><rect x="261.5" y="350" width="2" height="178" fill="url(#wv)" opacity="0.15"/><rect x="273.0" y="200" width="1" height="64" fill="url(#wv)" opacity="0.22"/><rect x="223.3" y="210" width="2" height="196" fill="url(#wv)" opacity="0.24"/><rect x="198.5" y="307" width="1" height="54" fill="url(#wl)" opacity="0.22"/><rect x="26.6" y="298" width="1" height="268" fill="url(#wv)" opacity="0.16"/><rect x="4.8" y="205" width="2" height="199" fill="url(#wl)" opacity="0.24"/><rect x="206.0" y="-40" width="1" height="276" fill="url(#wv)" opacity="0.19"/><rect x="99.3" y="-12" width="1" height="278" fill="url(#wl)" opacity="0.27"/><rect x="82.5" y="219" width="2" height="100" fill="url(#wv)" opacity="0.24"/><rect x="340.0" y="-31" width="1" height="177" fill="url(#wl)" opacity="0.35"/><rect x="302.8" y="-57" width="3" height="229" fill="url(#wl)" opacity="0.29"/><rect x="194.5" y="396" width="3" height="94" fill="url(#wv)" opacity="0.24"/><rect x="51.5" y="62" width="1.5" height="228" fill="url(#wv)" opacity="0.20"/><rect x="329.6" y="365" width="1.5" height="124" fill="url(#wl)" opacity="0.14"/><rect x="212.1" y="48" width="1" height="115" fill="url(#wl)" opacity="0.34"/><rect x="311.9" y="118" width="2" height="98" fill="url(#wl)" opacity="0.21"/><rect x="356.1" y="183" width="3" height="168" fill="url(#wv)" opacity="0.11"/><rect x="399.5" y="81" width="1.5" height="193" fill="url(#wv)" opacity="0.24"/><rect x="32.5" y="-48" width="1" height="86" fill="url(#wv)" opacity="0.30"/><rect x="144.2" y="-46" width="1" height="225" fill="url(#wv)" opacity="0.24"/><rect x="17.8" y="-30" width="1" height="234" fill="url(#wv)" opacity="0.18"/><rect x="341.7" y="286" width="1" height="270" fill="url(#wl)" opacity="0.21"/><rect x="103.1" y="-44" width="1.5" height="78" fill="url(#wl)" opacity="0.31"/><rect x="265.1" y="1" width="1.5" height="169" fill="url(#wl)" opacity="0.27"/><rect x="123.1" y="-50" width="2" height="156" fill="url(#wv)" opacity="0.16"/><rect x="299.2" y="292" width="2" height="278" fill="url(#wl)" opacity="0.23"/><rect x="120.2" y="-46" width="1" height="247" fill="url(#wv)" opacity="0.12"/><rect x="196.0" y="39" width="1" height="184" fill="url(#wl)" opacity="0.14"/><rect x="342.7" y="180" width="1" height="159" fill="url(#wv)" opacity="0.27"/><rect x="22.6" y="165" width="2" height="173" fill="url(#wl)" opacity="0.16"/><rect x="206.7" y="176" width="2" height="289" fill="url(#wv)" opacity="0.13"/><rect x="340.8" y="-10" width="1.5" height="175" fill="url(#wl)" opacity="0.14"/><rect x="329.3" y="103" width="1" height="207" fill="url(#wv)" opacity="0.19"/><rect x="372.2" y="236" width="1" height="156" fill="url(#wv)" opacity="0.17"/><rect x="178.9" y="345" width="1" height="145" fill="url(#wv)" opacity="0.20"/><rect x="222.2" y="90" width="1" height="137" fill="url(#wv)" opacity="0.29"/><rect x="276.8" y="141" width="2" height="92" fill="url(#wl)" opacity="0.25"/><rect x="52.7" y="259" width="3" height="211" fill="url(#wv)" opacity="0.16"/><rect x="315.5" y="386" width="1" height="231" fill="url(#wl)" opacity="0.26"/><rect x="145.7" y="27" width="1.5" height="132" fill="url(#wl)" opacity="0.29"/><rect x="42.6" y="9" width="1" height="99" fill="url(#wv)" opacity="0.17"/><rect x="124.3" y="232" width="1.5" height="99" fill="url(#wv)" opacity="0.15"/><rect x="162.3" y="331" width="1" height="53" fill="url(#wv)" opacity="0.15"/><rect x="410.0" y="5" width="1.5" height="166" fill="url(#wl)" opacity="0.21"/><rect x="309.7" y="209" width="2" height="225" fill="url(#wl)" opacity="0.31"/><rect x="279.2" y="234" width="1.5" height="220" fill="url(#wv)" opacity="0.17"/><rect x="262.6" y="51" width="1" height="274" fill="url(#wv)" opacity="0.26"/><rect x="65.4" y="-51" width="2" height="171" fill="url(#wl)" opacity="0.24"/><rect x="276.3" y="90" width="1" height="274" fill="url(#wv)" opacity="0.28"/><rect x="379.6" y="189" width="1" height="60" fill="url(#wv)" opacity="0.27"/><rect x="393.2" y="203" width="2" height="75" fill="url(#wv)" opacity="0.26"/><rect x="214.1" y="128" width="2" height="180" fill="url(#wl)" opacity="0.17"/><rect x="286.1" y="367" width="2" height="178" fill="url(#wl)" opacity="0.26"/><rect x="266.5" y="123" width="1.5" height="119" fill="url(#wv)" opacity="0.19"/><rect x="175.8" y="-10" width="2" height="195" fill="url(#wv)" opacity="0.19"/><rect x="398.6" y="380" width="1.5" height="299" fill="url(#wv)" opacity="0.14"/><rect x="388.5" y="231" width="1" height="252" fill="url(#wv)" opacity="0.22"/><rect x="94.5" y="233" width="1" height="138" fill="url(#wl)" opacity="0.31"/><rect x="195.7" y="238" width="1.5" height="240" fill="url(#wl)" opacity="0.23"/><rect x="327.5" y="112" width="1.5" height="117" fill="url(#wv)" opacity="0.19"/><rect x="77.7" y="306" width="1" height="251" fill="url(#wv)" opacity="0.24"/><rect x="133.9" y="232" width="3" height="157" fill="url(#wl)" opacity="0.20"/><rect x="388.2" y="319" width="2" height="64" fill="url(#wl)" opacity="0.30"/><rect x="58.7" y="-53" width="2" height="208" fill="url(#wv)" opacity="0.31"/><rect x="274.2" y="205" width="1.5" height="202" fill="url(#wl)" opacity="0.16"/><rect x="188.9" y="124" width="1" height="102" fill="url(#wv)" opacity="0.23"/><rect x="287.6" y="349" width="1" height="217" fill="url(#wl)" opacity="0.31"/><rect x="82.5" y="280" width="1.5" height="183" fill="url(#wv)" opacity="0.29"/><rect x="232.0" y="319" width="1.5" height="155" fill="url(#wv)" opacity="0.22"/><rect x="202.5" y="53" width="1" height="225" fill="url(#wv)" opacity="0.23"/><rect x="307.1" y="154" width="1" height="260" fill="url(#wv)" opacity="0.25"/><rect x="351.4" y="398" width="2" height="156" fill="url(#wl)" opacity="0.16"/><rect x="150.6" y="-39" width="1" height="55" fill="url(#wl)" opacity="0.35"/><rect x="338.0" y="162" width="1" height="178" fill="url(#wl)" opacity="0.13"/><rect x="300.2" y="335" width="1" height="135" fill="url(#wv)" opacity="0.20"/><rect x="219.7" y="97" width="1.5" height="121" fill="url(#wv)" opacity="0.11"/><rect x="120.9" y="125" width="2" height="257" fill="url(#wv)" opacity="0.16"/><rect x="211.7" y="303" width="1.5" height="214" fill="url(#wv)" opacity="0.17"/><rect x="125.1" y="-42" width="1" height="246" fill="url(#wl)" opacity="0.32"/><rect x="228.0" y="-10" width="1" height="150" fill="url(#wv)" opacity="0.28"/><rect x="198.6" y="357" width="1" height="247" fill="url(#wl)" opacity="0.26"/><rect x="262.0" y="245" width="1" height="103" fill="url(#wv)" opacity="0.27"/><rect x="42.4" y="133" width="1" height="267" fill="url(#wv)" opacity="0.30"/><rect x="5.6" y="197" width="1" height="247" fill="url(#wv)" opacity="0.17"/><rect x="176.3" y="199" width="2" height="55" fill="url(#wv)" opacity="0.30"/><rect x="208.1" y="294" width="1" height="256" fill="url(#wv)" opacity="0.25"/><rect x="169.1" y="117" width="1" height="54" fill="url(#wv)" opacity="0.31"/><rect x="410.0" y="191" width="3" height="242" fill="url(#wv)" opacity="0.20"/><rect x="374.4" y="-56" width="1" height="157" fill="url(#wl)" opacity="0.35"/><rect x="358.8" y="-1" width="1.5" height="267" fill="url(#wv)" opacity="0.26"/><rect x="101.3" y="108" width="1" height="281" fill="url(#wl)" opacity="0.28"/><rect x="60.5" y="195" width="1" height="123" fill="url(#wv)" opacity="0.25"/><rect x="372.0" y="-55" width="1" height="229" fill="url(#wv)" opacity="0.24"/><rect x="341.6" y="83" width="1" height="147" fill="url(#wl)" opacity="0.34"/><rect x="349.0" y="375" width="1" height="129" fill="url(#wl)" opacity="0.23"/><rect x="69.6" y="235" width="1" height="141" fill="url(#wl)" opacity="0.22"/><rect x="161.2" y="299" width="3" height="286" fill="url(#wv)" opacity="0.16"/><rect x="25.3" y="272" width="2" height="267" fill="url(#wv)" opacity="0.13"/><rect x="348.0" y="53" width="2" height="294" fill="url(#wv)" opacity="0.18"/><rect x="322.5" y="70" width="1.5" height="252" fill="url(#wv)" opacity="0.16"/><rect x="176.6" y="4" width="1" height="122" fill="url(#wl)" opacity="0.35"/><rect x="61.4" y="-21" width="3" height="137" fill="url(#wv)" opacity="0.28"/><rect x="83.8" y="-34" width="1.5" height="127" fill="url(#wv)" opacity="0.26"/><rect x="387.1" y="151" width="1" height="248" fill="url(#wv)" opacity="0.28"/><rect x="322.8" y="179" width="1.5" height="150" fill="url(#wv)" opacity="0.28"/><rect x="134.2" y="28" width="1.5" height="97" fill="url(#wv)" opacity="0.25"/><rect x="151.7" y="177" width="2" height="151" fill="url(#wv)" opacity="0.11"/><rect x="416.8" y="110" width="2" height="267" fill="url(#wv)" opacity="0.12"/><rect x="132.0" y="178" width="1" height="136" fill="url(#wv)" opacity="0.11"/><rect x="414.0" y="38" width="3" height="197" fill="url(#wl)" opacity="0.18"/><rect x="40.6" y="315" width="3" height="242" fill="url(#wl)" opacity="0.18"/><rect x="15.8" y="113" width="1.5" height="299" fill="url(#wv)" opacity="0.11"/><rect x="154.5" y="327" width="3" height="172" fill="url(#wl)" opacity="0.32"/><rect x="267.5" y="-19" width="1" height="227" fill="url(#wv)" opacity="0.15"/><rect x="37.5" y="329" width="2" height="96" fill="url(#wv)" opacity="0.15"/><rect x="301.3" y="57" width="1" height="60" fill="url(#wv)" opacity="0.30"/><rect x="378.1" y="175" width="1" height="114" fill="url(#wl)" opacity="0.30"/><rect x="202.1" y="286" width="1" height="86" fill="url(#wl)" opacity="0.28"/><rect x="124.9" y="-12" width="3" height="239" fill="url(#wv)" opacity="0.16"/><rect x="51.9" y="142" width="3" height="145" fill="url(#wl)" opacity="0.33"/><rect x="372.9" y="29" width="3" height="229" fill="url(#wv)" opacity="0.30"/><rect x="92.2" y="4" width="2" height="272" fill="url(#wv)" opacity="0.12"/><rect x="388.2" y="147" width="1" height="207" fill="url(#wv)" opacity="0.28"/><rect x="199.6" y="42" width="2" height="86" fill="url(#wv)" opacity="0.26"/><rect x="231.3" y="8" width="1" height="160" fill="url(#wv)" opacity="0.15"/><rect x="10.6" y="17" width="1.5" height="134" fill="url(#wv)" opacity="0.17"/><rect x="377.5" y="175" width="1" height="88" fill="url(#wl)" opacity="0.30"/><rect x="386.7" y="-5" width="3" height="259" fill="url(#wl)" opacity="0.34"/><rect x="180.6" y="364" width="1.5" height="300" fill="url(#wv)" opacity="0.16"/><rect x="374.6" y="388" width="1" height="258" fill="url(#wv)" opacity="0.24"/><rect x="184.8" y="143" width="2" height="178" fill="url(#wl)" opacity="0.34"/><rect x="119.7" y="358" width="2" height="159" fill="url(#wv)" opacity="0.23"/><rect x="57.7" y="46" width="1" height="180" fill="url(#wv)" opacity="0.23"/><rect x="346.5" y="20" width="3" height="240" fill="url(#wv)" opacity="0.25"/><rect x="262.7" y="33" width="1.5" height="196" fill="url(#wv)" opacity="0.26"/><rect x="170.6" y="99" width="1" height="180" fill="url(#wv)" opacity="0.24"/><rect x="395.3" y="357" width="1" height="54" fill="url(#wv)" opacity="0.29"/><rect x="111.3" y="391" width="1" height="191" fill="url(#wv)" opacity="0.25"/><rect x="240.3" y="367" width="1" height="139" fill="url(#wl)" opacity="0.14"/><rect x="149.1" y="336" width="1.5" height="254" fill="url(#wv)" opacity="0.26"/><rect x="159.4" y="-11" width="1" height="123" fill="url(#wl)" opacity="0.22"/><rect x="10.7" y="383" width="1" height="55" fill="url(#wv)" opacity="0.14"/><rect x="42.9" y="378" width="1.5" height="189" fill="url(#wv)" opacity="0.30"/><rect x="308.8" y="215" width="1.5" height="54" fill="url(#wv)" opacity="0.22"/><rect x="293.7" y="-17" width="1" height="138" fill="url(#wv)" opacity="0.16"/><rect x="194.3" y="-4" width="1.5" height="78" fill="url(#wl)" opacity="0.24"/><rect x="95.1" y="202" width="1.5" height="87" fill="url(#wl)" opacity="0.16"/><rect x="345.3" y="213" width="2" height="223" fill="url(#wl)" opacity="0.13"/><rect x="405.7" y="95" width="1" height="244" fill="url(#wv)" opacity="0.17"/><rect x="182.1" y="328" width="2" height="254" fill="url(#wv)" opacity="0.21"/><rect x="400.4" y="133" width="2" height="112" fill="url(#wl)" opacity="0.20"/><rect x="221.9" y="32" width="1" height="131" fill="url(#wl)" opacity="0.17"/><rect x="175.9" y="369" width="2" height="244" fill="url(#wl)" opacity="0.31"/><rect x="369.7" y="234" width="1" height="59" fill="url(#wv)" opacity="0.25"/><rect x="114.3" y="55" width="1" height="205" fill="url(#wv)" opacity="0.20"/><rect x="397.5" y="99" width="1.5" height="78" fill="url(#wv)" opacity="0.11"/><rect x="400.9" y="210" width="1.5" height="71" fill="url(#wl)" opacity="0.22"/><rect x="213.9" y="204" width="1.5" height="279" fill="url(#wv)" opacity="0.26"/><rect x="309.5" y="219" width="1.5" height="260" fill="url(#wv)" opacity="0.24"/><rect x="84.1" y="191" width="2" height="165" fill="url(#wl)" opacity="0.23"/><rect x="129.8" y="26" width="1.5" height="133" fill="url(#wv)" opacity="0.31"/><rect x="165.7" y="376" width="2" height="91" fill="url(#wv)" opacity="0.17"/><rect x="112.8" y="294" width="1.5" height="124" fill="url(#wv)" opacity="0.11"/><rect x="364.2" y="177" width="3" height="214" fill="url(#wl)" opacity="0.20"/><rect x="318.9" y="250" width="1.5" height="297" fill="url(#wl)" opacity="0.22"/><rect x="279.3" y="222" width="1" height="219" fill="url(#wl)" opacity="0.31"/><rect x="216.4" y="229" width="3" height="117" fill="url(#wl)" opacity="0.28"/><rect x="172.6" y="291" width="1" height="51" fill="url(#wv)" opacity="0.21"/><rect x="402.4" y="299" width="1" height="154" fill="url(#wl)" opacity="0.26"/><rect x="158.7" y="72" width="3" height="223" fill="url(#wv)" opacity="0.18"/><rect x="219.9" y="-57" width="2" height="212" fill="url(#wl)" opacity="0.35"/><rect x="159.1" y="79" width="1.5" height="96" fill="url(#wv)" opacity="0.23"/><rect x="243.1" y="91" width="1" height="255" fill="url(#wl)" opacity="0.26"/><rect x="101.4" y="135" width="2" height="101" fill="url(#wl)" opacity="0.12"/><rect x="19.8" y="186" width="3" height="125" fill="url(#wv)" opacity="0.24"/><rect x="182.7" y="104" width="2" height="147" fill="url(#wv)" opacity="0.18"/><rect x="396.2" y="-15" width="1" height="181" fill="url(#wv)" opacity="0.19"/><rect x="234.6" y="382" width="1" height="270" fill="url(#wv)" opacity="0.20"/><rect x="261.1" y="282" width="2" height="223" fill="url(#wv)" opacity="0.18"/><rect x="153.3" y="175" width="1" height="257" fill="url(#wv)" opacity="0.30"/><rect x="288.4" y="180" width="2" height="208" fill="url(#wl)" opacity="0.17"/><rect x="373.3" y="229" width="2" height="96" fill="url(#wl)" opacity="0.20"/><rect x="415.4" y="-55" width="1" height="223" fill="url(#wv)" opacity="0.26"/><rect x="231.1" y="-15" width="1.5" height="149" fill="url(#wv)" opacity="0.11"/><rect x="73.2" y="350" width="1.5" height="268" fill="url(#wv)" opacity="0.13"/><rect x="83.0" y="177" width="1" height="86" fill="url(#wv)" opacity="0.11"/><rect x="31.8" y="221" width="3" height="256" fill="url(#wl)" opacity="0.13"/><rect x="5.2" y="49" width="2" height="86" fill="url(#wv)" opacity="0.11"/><rect x="262.8" y="146" width="1" height="137" fill="url(#wv)" opacity="0.11"/><rect x="372.2" y="224" width="1" height="160" fill="url(#wv)" opacity="0.11"/><rect x="389.1" y="352" width="1" height="129" fill="url(#wl)" opacity="0.19"/><rect x="251.9" y="-29" width="3" height="295" fill="url(#wl)" opacity="0.28"/><rect x="244.5" y="341" width="2" height="127" fill="url(#wv)" opacity="0.27"/><rect x="101.7" y="114" width="1" height="92" fill="url(#wv)" opacity="0.29"/><rect x="165.5" y="184" width="2" height="79" fill="url(#wv)" opacity="0.19"/><rect x="27.4" y="358" width="1" height="156" fill="url(#wv)" opacity="0.19"/><rect x="195.2" y="-44" width="2" height="109" fill="url(#wl)" opacity="0.20"/><rect x="65.2" y="64" width="1" height="73" fill="url(#wl)" opacity="0.15"/><rect x="185.3" y="102" width="1.5" height="90" fill="url(#wl)" opacity="0.21"/><rect x="400.6" y="158" width="1.5" height="124" fill="url(#wv)" opacity="0.29"/></svg><svg class="abs" style="left:0;top:0" width="939" height="615" viewBox="0 0 939 615"><defs><radialGradient id="gw" cx="0.25" cy="0.2" r="0.95"><stop offset="0" stop-color="#ffffff"/><stop offset="0.14" stop-color="#f6f6f6"/><stop offset="0.4" stop-color="#d2d2d2"/><stop offset="0.7" stop-color="#a6a6a6"/><stop offset="1" stop-color="#6a6a6a"/></radialGradient><radialGradient id="gb" cx="0.25" cy="0.2" r="0.95"><stop offset="0" stop-color="#5c5c5c"/><stop offset="0.16" stop-color="#3e3e3e"/><stop offset="0.42" stop-color="#262626"/><stop offset="0.75" stop-color="#141414"/><stop offset="1" stop-color="#050505"/></radialGradient><radialGradient id="sh" cx="0.5" cy="0.5" r="0.5"><stop offset="0.8" stop-color="#000" stop-opacity="0.62"/><stop offset="1" stop-color="#000" stop-opacity="0"/></radialGradient><radialGradient id="rim" cx="0.5" cy="0.5" r="0.5"><stop offset="0.78" stop-color="#000" stop-opacity="0"/><stop offset="1" stop-color="#000" stop-opacity="0.22"/></radialGradient></defs><rect x="161" y="162" width="2" height="396" fill="#000" fill-opacity="0.52"/><rect x="140" y="183" width="396" height="2" fill="#000" fill-opacity="0.52"/><rect x="183" y="162" width="2" height="396" fill="#000" fill-opacity="0.52"/><rect x="140" y="205" width="396" height="2" fill="#000" fill-opacity="0.52"/><rect x="205" y="162" width="2" height="396" fill="#000" fill-opacity="0.52"/><rect x="140" y="227" width="396" height="2" fill="#000" fill-opacity="0.52"/><rect x="227" y="162" width="2" height="396" fill="#000" fill-opacity="0.52"/><rect x="140" y="249" width="396" height="2" fill="#000" fill-opacity="0.52"/><rect x="249" y="162" width="2" height="396" fill="#000" fill-opacity="0.52"/><rect x="140" y="271" width="396" height="2" fill="#000" fill-opacity="0.52"/><rect x="271" y="162" width="2" height="396" fill="#000" fill-opacity="0.52"/><rect x="140" y="293" width="396" height="2" fill="#000" fill-opacity="0.52"/><rect x="293" y="162" width="2" height="396" fill="#000" fill-opacity="0.52"/><rect x="140" y="315" width="396" height="2" fill="#000" fill-opacity="0.52"/><rect x="315" y="162" width="2" height="396" fill="#000" fill-opacity="0.52"/><rect x="140" y="337" width="396" height="2" fill="#000" fill-opacity="0.52"/><rect x="337" y="162" width="2" height="396" fill="#000" fill-opacity="0.52"/><rect x="140" y="359" width="396" height="2" fill="#000" fill-opacity="0.52"/><rect x="359" y="162" width="2" height="396" fill="#000" fill-opacity="0.52"/><rect x="140" y="381" width="396" height="2" fill="#000" fill-opacity="0.52"/><rect x="381" y="162" width="2" height="396" fill="#000" fill-opacity="0.52"/><rect x="140" y="403" width="396" height="2" fill="#000" fill-opacity="0.52"/><rect x="403" y="162" width="2" height="396" fill="#000" fill-opacity="0.52"/><rect x="140" y="425" width="396" height="2" fill="#000" fill-opacity="0.52"/><rect x="425" y="162" width="2" height="396" fill="#000" fill-opacity="0.52"/><rect x="140" y="447" width="396" height="2" fill="#000" fill-opacity="0.52"/><rect x="447" y="162" width="2" height="396" fill="#000" fill-opacity="0.52"/><rect x="140" y="469" width="396" height="2" fill="#000" fill-opacity="0.52"/><rect x="469" y="162" width="2" height="396" fill="#000" fill-opacity="0.52"/><rect x="140" y="491" width="396" height="2" fill="#000" fill-opacity="0.52"/><rect x="491" y="162" width="2" height="396" fill="#000" fill-opacity="0.52"/><rect x="140" y="513" width="396" height="2" fill="#000" fill-opacity="0.52"/><rect x="513" y="162" width="2" height="396" fill="#000" fill-opacity="0.52"/><rect x="140" y="535" width="396" height="2" fill="#000" fill-opacity="0.52"/><rect x="140" y="162" width="396" height="396" fill="none" stroke="#000" stroke-width="2"/><circle cx="206" cy="228" r="2.8" fill="#000"/><circle cx="206" cy="360" r="2.8" fill="#000"/><circle cx="206" cy="492" r="2.8" fill="#000"/><circle cx="338" cy="228" r="2.8" fill="#000"/><circle cx="338" cy="360" r="2.8" fill="#000"/><circle cx="338" cy="492" r="2.8" fill="#000"/><circle cx="470" cy="228" r="2.8" fill="#000"/><circle cx="470" cy="360" r="2.8" fill="#000"/><circle cx="470" cy="492" r="2.8" fill="#000"/><circle cx="229.1" cy="185.2" r="10.9" fill="url(#sh)"/><circle cx="228" cy="184" r="9.4" fill="url(#gw)"/><circle cx="295.1" cy="185.2" r="10.9" fill="url(#sh)"/><circle cx="294" cy="184" r="9.4" fill="url(#gb)"/><circle cx="339.1" cy="185.2" r="10.9" fill="url(#sh)"/><circle cx="338" cy="184" r="9.4" fill="url(#gb)"/><circle cx="163.1" cy="207.2" r="10.9" fill="url(#sh)"/><circle cx="162" cy="206" r="9.4" fill="url(#gw)"/><circle cx="207.1" cy="207.2" r="10.9" fill="url(#sh)"/><circle cx="206" cy="206" r="9.4" fill="url(#gw)"/><circle cx="251.1" cy="207.2" r="10.9" fill="url(#sh)"/><circle cx="250" cy="206" r="9.4" fill="url(#gb)"/><circle cx="295.1" cy="207.2" r="10.9" fill="url(#sh)"/><circle cx="294" cy="206" r="9.4" fill="url(#gw)"/><circle cx="317.1" cy="207.2" r="10.9" fill="url(#sh)"/><circle cx="316" cy="206" r="9.4" fill="url(#gb)"/><circle cx="361.1" cy="207.2" r="10.9" fill="url(#sh)"/><circle cx="360" cy="206" r="9.4" fill="url(#gb)"/><circle cx="405.1" cy="207.2" r="10.9" fill="url(#sh)"/><circle cx="404" cy="206" r="9.4" fill="url(#gb)"/><circle cx="471.1" cy="207.2" r="10.9" fill="url(#sh)"/><circle cx="470" cy="206" r="9.4" fill="url(#gw)"/><circle cx="493.1" cy="207.2" r="10.9" fill="url(#sh)"/><circle cx="492" cy="206" r="9.4" fill="url(#gw)"/><circle cx="163.1" cy="229.2" r="10.9" fill="url(#sh)"/><circle cx="162" cy="228" r="9.4" fill="url(#gb)"/><circle cx="185.1" cy="229.2" r="10.9" fill="url(#sh)"/><circle cx="184" cy="228" r="9.4" fill="url(#gw)"/><circle cx="229.1" cy="229.2" r="10.9" fill="url(#sh)"/><circle cx="228" cy="228" r="9.4" fill="url(#gw)"/><circle cx="251.1" cy="229.2" r="10.9" fill="url(#sh)"/><circle cx="250" cy="228" r="9.4" fill="url(#gb)"/><circle cx="273.1" cy="229.2" r="10.9" fill="url(#sh)"/><circle cx="272" cy="228" r="9.4" fill="url(#gw)"/><circle cx="317.1" cy="229.2" r="10.9" fill="url(#sh)"/><circle cx="316" cy="228" r="9.4" fill="url(#gw)"/><circle cx="361.1" cy="229.2" r="10.9" fill="url(#sh)"/><circle cx="360" cy="228" r="9.4" fill="url(#gb)"/><circle cx="383.1" cy="229.2" r="10.9" fill="url(#sh)"/><circle cx="382" cy="228" r="9.4" fill="url(#gw)"/><circle cx="449.1" cy="229.2" r="10.9" fill="url(#sh)"/><circle cx="448" cy="228" r="9.4" fill="url(#gw)"/><circle cx="493.1" cy="229.2" r="10.9" fill="url(#sh)"/><circle cx="492" cy="228" r="9.4" fill="url(#gb)"/><circle cx="515.1" cy="229.2" r="10.9" fill="url(#sh)"/><circle cx="514" cy="228" r="9.4" fill="url(#gb)"/><circle cx="163.1" cy="251.2" r="10.9" fill="url(#sh)"/><circle cx="162" cy="250" r="9.4" fill="url(#gb)"/><circle cx="185.1" cy="251.2" r="10.9" fill="url(#sh)"/><circle cx="184" cy="250" r="9.4" fill="url(#gb)"/><circle cx="229.1" cy="251.2" r="10.9" fill="url(#sh)"/><circle cx="228" cy="250" r="9.4" fill="url(#gw)"/><circle cx="295.1" cy="251.2" r="10.9" fill="url(#sh)"/><circle cx="294" cy="250" r="9.4" fill="url(#gw)"/><circle cx="427.1" cy="251.2" r="10.9" fill="url(#sh)"/><circle cx="426" cy="250" r="9.4" fill="url(#gw)"/><circle cx="163.1" cy="273.2" r="10.9" fill="url(#sh)"/><circle cx="162" cy="272" r="9.4" fill="url(#gw)"/><circle cx="273.1" cy="273.2" r="10.9" fill="url(#sh)"/><circle cx="272" cy="272" r="9.4" fill="url(#gb)"/><circle cx="163.1" cy="295.2" r="10.9" fill="url(#sh)"/><circle cx="162" cy="294" r="9.4" fill="url(#gb)"/><circle cx="185.1" cy="295.2" r="10.9" fill="url(#sh)"/><circle cx="184" cy="294" r="9.4" fill="url(#gw)"/><circle cx="207.1" cy="295.2" r="10.9" fill="url(#sh)"/><circle cx="206" cy="294" r="9.4" fill="url(#gw)"/><circle cx="229.1" cy="295.2" r="10.9" fill="url(#sh)"/><circle cx="228" cy="294" r="9.4" fill="url(#gw)"/><circle cx="251.1" cy="295.2" r="10.9" fill="url(#sh)"/><circle cx="250" cy="294" r="9.4" fill="url(#gw)"/><circle cx="493.1" cy="295.2" r="10.9" fill="url(#sh)"/><circle cx="492" cy="294" r="9.4" fill="url(#gb)"/><circle cx="141.1" cy="317.2" r="10.9" fill="url(#sh)"/><circle cx="140" cy="316" r="9.4" fill="url(#gb)"/><circle cx="185.1" cy="317.2" r="10.9" fill="url(#sh)"/><circle cx="184" cy="316" r="9.4" fill="url(#gb)"/><circle cx="207.1" cy="317.2" r="10.9" fill="url(#sh)"/><circle cx="206" cy="316" r="9.4" fill="url(#gw)"/><circle cx="229.1" cy="317.2" r="10.9" fill="url(#sh)"/><circle cx="228" cy="316" r="9.4" fill="url(#gb)"/><circle cx="251.1" cy="317.2" r="10.9" fill="url(#sh)"/><circle cx="250" cy="316" r="9.4" fill="url(#gb)"/><circle cx="273.1" cy="317.2" r="10.9" fill="url(#sh)"/><circle cx="272" cy="316" r="9.4" fill="url(#gw)"/><circle cx="185.1" cy="339.2" r="10.9" fill="url(#sh)"/><circle cx="184" cy="338" r="9.4" fill="url(#gb)"/><circle cx="207.1" cy="339.2" r="10.9" fill="url(#sh)"/><circle cx="206" cy="338" r="9.4" fill="url(#gb)"/><circle cx="229.1" cy="339.2" r="10.9" fill="url(#sh)"/><circle cx="228" cy="338" r="9.4" fill="url(#gw)"/><circle cx="515.1" cy="339.2" r="10.9" fill="url(#sh)"/><circle cx="514" cy="338" r="9.4" fill="url(#gb)"/><circle cx="185.1" cy="361.2" r="10.9" fill="url(#sh)"/><circle cx="184" cy="360" r="9.4" fill="url(#gw)"/><circle cx="207.1" cy="361.2" r="10.9" fill="url(#sh)"/><circle cx="206" cy="360" r="9.4" fill="url(#gb)"/><circle cx="229.1" cy="361.2" r="10.9" fill="url(#sh)"/><circle cx="228" cy="360" r="9.4" fill="url(#gw)"/><circle cx="273.1" cy="361.2" r="10.9" fill="url(#sh)"/><circle cx="272" cy="360" r="9.4" fill="url(#gw)"/><circle cx="471.1" cy="361.2" r="10.9" fill="url(#sh)"/><circle cx="470" cy="360" r="9.4" fill="url(#gb)"/><circle cx="493.1" cy="361.2" r="10.9" fill="url(#sh)"/><circle cx="492" cy="360" r="9.4" fill="url(#gb)"/><circle cx="515.1" cy="361.2" r="10.9" fill="url(#sh)"/><circle cx="514" cy="360" r="9.4" fill="url(#gw)"/><circle cx="493.1" cy="383.2" r="10.9" fill="url(#sh)"/><circle cx="492" cy="382" r="9.4" fill="url(#gw)"/><circle cx="515.1" cy="383.2" r="10.9" fill="url(#sh)"/><circle cx="514" cy="382" r="9.4" fill="url(#gw)"/><circle cx="207.1" cy="405.2" r="10.9" fill="url(#sh)"/><circle cx="206" cy="404" r="9.4" fill="url(#gb)"/><circle cx="273.1" cy="405.2" r="10.9" fill="url(#sh)"/><circle cx="272" cy="404" r="9.4" fill="url(#gb)"/><circle cx="493.1" cy="405.2" r="10.9" fill="url(#sh)"/><circle cx="492" cy="404" r="9.4" fill="url(#gw)"/><circle cx="229.1" cy="427.2" r="10.9" fill="url(#sh)"/><circle cx="228" cy="426" r="9.4" fill="url(#gb)"/><circle cx="427.1" cy="427.2" r="10.9" fill="url(#sh)"/><circle cx="426" cy="426" r="9.4" fill="url(#gw)"/><circle cx="493.1" cy="427.2" r="10.9" fill="url(#sh)"/><circle cx="492" cy="426" r="9.4" fill="url(#gb)"/><circle cx="185.1" cy="449.2" r="10.9" fill="url(#sh)"/><circle cx="184" cy="448" r="9.4" fill="url(#gw)"/><circle cx="229.1" cy="449.2" r="10.9" fill="url(#sh)"/><circle cx="228" cy="448" r="9.4" fill="url(#gb)"/><circle cx="251.1" cy="449.2" r="10.9" fill="url(#sh)"/><circle cx="250" cy="448" r="9.4" fill="url(#gw)"/><circle cx="295.1" cy="449.2" r="10.9" fill="url(#sh)"/><circle cx="294" cy="448" r="9.4" fill="url(#gw)"/><circle cx="339.1" cy="449.2" r="10.9" fill="url(#sh)"/><circle cx="338" cy="448" r="9.4" fill="url(#gb)"/><circle cx="405.1" cy="449.2" r="10.9" fill="url(#sh)"/><circle cx="404" cy="448" r="9.4" fill="url(#gw)"/><circle cx="449.1" cy="449.2" r="10.9" fill="url(#sh)"/><circle cx="448" cy="448" r="9.4" fill="url(#gw)"/><circle cx="471.1" cy="449.2" r="10.9" fill="url(#sh)"/><circle cx="470" cy="448" r="9.4" fill="url(#gw)"/><circle cx="493.1" cy="449.2" r="10.9" fill="url(#sh)"/><circle cx="492" cy="448" r="9.4" fill="url(#gb)"/><circle cx="163.1" cy="471.2" r="10.9" fill="url(#sh)"/><circle cx="162" cy="470" r="9.4" fill="url(#gb)"/><circle cx="229.1" cy="471.2" r="10.9" fill="url(#sh)"/><circle cx="228" cy="470" r="9.4" fill="url(#gb)"/><circle cx="339.1" cy="471.2" r="10.9" fill="url(#sh)"/><circle cx="338" cy="470" r="9.4" fill="url(#gb)"/><circle cx="405.1" cy="471.2" r="10.9" fill="url(#sh)"/><circle cx="404" cy="470" r="9.4" fill="url(#gw)"/><circle cx="427.1" cy="471.2" r="10.9" fill="url(#sh)"/><circle cx="426" cy="470" r="9.4" fill="url(#gw)"/><circle cx="449.1" cy="471.2" r="10.9" fill="url(#sh)"/><circle cx="448" cy="470" r="9.4" fill="url(#gb)"/><circle cx="471.1" cy="471.2" r="10.9" fill="url(#sh)"/><circle cx="470" cy="470" r="9.4" fill="url(#gb)"/><circle cx="493.1" cy="471.2" r="10.9" fill="url(#sh)"/><circle cx="492" cy="470" r="9.4" fill="url(#gw)"/><circle cx="515.1" cy="471.2" r="10.9" fill="url(#sh)"/><circle cx="514" cy="470" r="9.4" fill="url(#gw)"/><circle cx="185.1" cy="493.2" r="10.9" fill="url(#sh)"/><circle cx="184" cy="492" r="9.4" fill="url(#gb)"/><circle cx="207.1" cy="493.2" r="10.9" fill="url(#sh)"/><circle cx="206" cy="492" r="9.4" fill="url(#gb)"/><circle cx="251.1" cy="493.2" r="10.9" fill="url(#sh)"/><circle cx="250" cy="492" r="9.4" fill="url(#gw)"/><circle cx="295.1" cy="493.2" r="10.9" fill="url(#sh)"/><circle cx="294" cy="492" r="9.4" fill="url(#gb)"/><circle cx="339.1" cy="493.2" r="10.9" fill="url(#sh)"/><circle cx="338" cy="492" r="9.4" fill="url(#gw)"/><circle cx="361.1" cy="493.2" r="10.9" fill="url(#sh)"/><circle cx="360" cy="492" r="9.4" fill="url(#gb)"/><circle cx="383.1" cy="493.2" r="10.9" fill="url(#sh)"/><circle cx="382" cy="492" r="9.4" fill="url(#gb)"/><circle cx="405.1" cy="493.2" r="10.9" fill="url(#sh)"/><circle cx="404" cy="492" r="9.4" fill="url(#gb)"/><circle cx="427.1" cy="493.2" r="10.9" fill="url(#sh)"/><circle cx="426" cy="492" r="9.4" fill="url(#gb)"/><circle cx="449.1" cy="493.2" r="10.9" fill="url(#sh)"/><circle cx="448" cy="492" r="9.4" fill="url(#gw)"/><circle cx="471.1" cy="493.2" r="10.9" fill="url(#sh)"/><circle cx="470" cy="492" r="9.4" fill="url(#gb)"/><circle cx="493.1" cy="493.2" r="10.9" fill="url(#sh)"/><circle cx="492" cy="492" r="9.4" fill="url(#gb)"/><circle cx="515.1" cy="493.2" r="10.9" fill="url(#sh)"/><circle cx="514" cy="492" r="9.4" fill="url(#gw)"/><circle cx="163.1" cy="515.2" r="10.9" fill="url(#sh)"/><circle cx="162" cy="514" r="9.4" fill="url(#gw)"/><circle cx="185.1" cy="515.2" r="10.9" fill="url(#sh)"/><circle cx="184" cy="514" r="9.4" fill="url(#gw)"/><circle cx="207.1" cy="515.2" r="10.9" fill="url(#sh)"/><circle cx="206" cy="514" r="9.4" fill="url(#gb)"/><circle cx="229.1" cy="515.2" r="10.9" fill="url(#sh)"/><circle cx="228" cy="514" r="9.4" fill="url(#gb)"/><circle cx="251.1" cy="515.2" r="10.9" fill="url(#sh)"/><circle cx="250" cy="514" r="9.4" fill="url(#gw)"/><circle cx="339.1" cy="515.2" r="10.9" fill="url(#sh)"/><circle cx="338" cy="514" r="9.4" fill="url(#gw)"/><circle cx="361.1" cy="515.2" r="10.9" fill="url(#sh)"/><circle cx="360" cy="514" r="9.4" fill="url(#gb)"/><circle cx="383.1" cy="515.2" r="10.9" fill="url(#sh)"/><circle cx="382" cy="514" r="9.4" fill="url(#gb)"/><circle cx="405.1" cy="515.2" r="10.9" fill="url(#sh)"/><circle cx="404" cy="514" r="9.4" fill="url(#gw)"/><circle cx="427.1" cy="515.2" r="10.9" fill="url(#sh)"/><circle cx="426" cy="514" r="9.4" fill="url(#gw)"/><circle cx="449.1" cy="515.2" r="10.9" fill="url(#sh)"/><circle cx="448" cy="514" r="9.4" fill="url(#gw)"/><circle cx="471.1" cy="515.2" r="10.9" fill="url(#sh)"/><circle cx="470" cy="514" r="9.4" fill="url(#gw)"/><circle cx="493.1" cy="515.2" r="10.9" fill="url(#sh)"/><circle cx="492" cy="514" r="9.4" fill="url(#gb)"/><circle cx="515.1" cy="515.2" r="10.9" fill="url(#sh)"/><circle cx="514" cy="514" r="9.4" fill="url(#gw)"/><circle cx="163.1" cy="537.2" r="10.9" fill="url(#sh)"/><circle cx="162" cy="536" r="9.4" fill="url(#gb)"/><circle cx="185.1" cy="537.2" r="10.9" fill="url(#sh)"/><circle cx="184" cy="536" r="9.4" fill="url(#gb)"/><circle cx="207.1" cy="537.2" r="10.9" fill="url(#sh)"/><circle cx="206" cy="536" r="9.4" fill="url(#gw)"/><circle cx="229.1" cy="537.2" r="10.9" fill="url(#sh)"/><circle cx="228" cy="536" r="9.4" fill="url(#gw)"/><circle cx="251.1" cy="537.2" r="10.9" fill="url(#sh)"/><circle cx="250" cy="536" r="9.4" fill="url(#gw)"/><circle cx="339.1" cy="537.2" r="10.9" fill="url(#sh)"/><circle cx="338" cy="536" r="9.4" fill="url(#gw)"/><circle cx="361.1" cy="537.2" r="10.9" fill="url(#sh)"/><circle cx="360" cy="536" r="9.4" fill="url(#gw)"/><circle cx="383.1" cy="537.2" r="10.9" fill="url(#sh)"/><circle cx="382" cy="536" r="9.4" fill="url(#gb)"/><circle cx="405.1" cy="537.2" r="10.9" fill="url(#sh)"/><circle cx="404" cy="536" r="9.4" fill="url(#gw)"/><circle cx="449.1" cy="537.2" r="10.9" fill="url(#sh)"/><circle cx="448" cy="536" r="9.4" fill="url(#gw)"/><circle cx="471.1" cy="537.2" r="10.9" fill="url(#sh)"/><circle cx="470" cy="536" r="9.4" fill="url(#gb)"/><circle cx="493.1" cy="537.2" r="10.9" fill="url(#sh)"/><circle cx="492" cy="536" r="9.4" fill="url(#gb)"/><circle cx="515.1" cy="537.2" r="10.9" fill="url(#sh)"/><circle cx="514" cy="536" r="9.4" fill="url(#gw)"/><circle cx="383.1" cy="559.2" r="10.9" fill="url(#sh)"/><circle cx="382" cy="558" r="9.4" fill="url(#gb)"/><circle cx="427.1" cy="559.2" r="10.9" fill="url(#sh)"/><circle cx="426" cy="558" r="9.4" fill="url(#gb)"/><circle cx="449.1" cy="559.2" r="10.9" fill="url(#sh)"/><circle cx="448" cy="558" r="9.4" fill="url(#gb)"/><path d="M514.0 378.4 L519.2 385.2 L508.8 385.2 Z" fill="#f00"/></svg><style>.lb{font-size:10.4px;color:#000}</style><div class="t lb" style="left:130.4px;top:139.80px;width:20px;text-align:center">A</div><div class="t lb" style="left:130.4px;top:574.90px;width:20px;text-align:center">A</div><div class="t lb" style="left:152.4px;top:139.80px;width:20px;text-align:center">B</div><div class="t lb" style="left:152.4px;top:574.90px;width:20px;text-align:center">B</div><div class="t lb" style="left:174.4px;top:139.80px;width:20px;text-align:center">C</div><div class="t lb" style="left:174.4px;top:574.90px;width:20px;text-align:center">C</div><div class="t lb" style="left:196.4px;top:139.80px;width:20px;text-align:center">D</div><div class="t lb" style="left:196.4px;top:574.90px;width:20px;text-align:center">D</div><div class="t lb" style="left:218.4px;top:139.80px;width:20px;text-align:center">E</div><div class="t lb" style="left:218.4px;top:574.90px;width:20px;text-align:center">E</div><div class="t lb" style="left:240.4px;top:139.80px;width:20px;text-align:center">F</div><div class="t lb" style="left:240.4px;top:574.90px;width:20px;text-align:center">F</div><div class="t lb" style="left:262.4px;top:139.80px;width:20px;text-align:center">G</div><div class="t lb" style="left:262.4px;top:574.90px;width:20px;text-align:center">G</div><div class="t lb" style="left:284.4px;top:139.80px;width:20px;text-align:center">H</div><div class="t lb" style="left:284.4px;top:574.90px;width:20px;text-align:center">H</div><div class="t lb" style="left:306.4px;top:139.80px;width:20px;text-align:center">J</div><div class="t lb" style="left:306.4px;top:574.90px;width:20px;text-align:center">J</div><div class="t lb" style="left:328.4px;top:139.80px;width:20px;text-align:center">K</div><div class="t lb" style="left:328.4px;top:574.90px;width:20px;text-align:center">K</div><div class="t lb" style="left:350.4px;top:139.80px;width:20px;text-align:center">L</div><div class="t lb" style="left:350.4px;top:574.90px;width:20px;text-align:center">L</div><div class="t lb" style="left:372.4px;top:139.80px;width:20px;text-align:center">M</div><div class="t lb" style="left:372.4px;top:574.90px;width:20px;text-align:center">M</div><div class="t lb" style="left:394.4px;top:139.80px;width:20px;text-align:center">N</div><div class="t lb" style="left:394.4px;top:574.90px;width:20px;text-align:center">N</div><div class="t lb" style="left:416.4px;top:139.80px;width:20px;text-align:center">O</div><div class="t lb" style="left:416.4px;top:574.90px;width:20px;text-align:center">O</div><div class="t lb" style="left:438.4px;top:139.80px;width:20px;text-align:center">P</div><div class="t lb" style="left:438.4px;top:574.90px;width:20px;text-align:center">P</div><div class="t lb" style="left:460.4px;top:139.80px;width:20px;text-align:center">Q</div><div class="t lb" style="left:460.4px;top:574.90px;width:20px;text-align:center">Q</div><div class="t lb" style="left:482.4px;top:139.80px;width:20px;text-align:center">R</div><div class="t lb" style="left:482.4px;top:574.90px;width:20px;text-align:center">R</div><div class="t lb" style="left:504.4px;top:139.80px;width:20px;text-align:center">S</div><div class="t lb" style="left:504.4px;top:574.90px;width:20px;text-align:center">S</div><div class="t lb" style="left:526.4px;top:139.80px;width:20px;text-align:center">T</div><div class="t lb" style="left:526.4px;top:574.90px;width:20px;text-align:center">T</div><div class="t lb" style="left:110.2px;top:554.00px;width:20px;text-align:center">1</div><div class="t lb" style="left:549.3px;top:554.00px;width:20px;text-align:center">1</div><div class="t lb" style="left:110.2px;top:532.00px;width:20px;text-align:center">2</div><div class="t lb" style="left:549.3px;top:532.00px;width:20px;text-align:center">2</div><div class="t lb" style="left:110.2px;top:510.00px;width:20px;text-align:center">3</div><div class="t lb" style="left:549.3px;top:510.00px;width:20px;text-align:center">3</div><div class="t lb" style="left:110.2px;top:488.00px;width:20px;text-align:center">4</div><div class="t lb" style="left:549.3px;top:488.00px;width:20px;text-align:center">4</div><div class="t lb" style="left:110.2px;top:466.00px;width:20px;text-align:center">5</div><div class="t lb" style="left:549.3px;top:466.00px;width:20px;text-align:center">5</div><div class="t lb" style="left:110.2px;top:444.00px;width:20px;text-align:center">6</div><div class="t lb" style="left:549.3px;top:444.00px;width:20px;text-align:center">6</div><div class="t lb" style="left:110.2px;top:422.00px;width:20px;text-align:center">7</div><div class="t lb" style="left:549.3px;top:422.00px;width:20px;text-align:center">7</div><div class="t lb" style="left:110.2px;top:400.00px;width:20px;text-align:center">8</div><div class="t lb" style="left:549.3px;top:400.00px;width:20px;text-align:center">8</div><div class="t lb" style="left:110.2px;top:378.00px;width:20px;text-align:center">9</div><div class="t lb" style="left:549.3px;top:378.00px;width:20px;text-align:center">9</div><div class="t lb" style="left:110.2px;top:356.00px;width:20px;text-align:center">10</div><div class="t lb" style="left:549.3px;top:356.00px;width:20px;text-align:center">10</div><div class="t lb" style="left:110.2px;top:334.00px;width:20px;text-align:center">11</div><div class="t lb" style="left:549.3px;top:334.00px;width:20px;text-align:center">11</div><div class="t lb" style="left:110.2px;top:312.00px;width:20px;text-align:center">12</div><div class="t lb" style="left:549.3px;top:312.00px;width:20px;text-align:center">12</div><div class="t lb" style="left:110.2px;top:290.00px;width:20px;text-align:center">13</div><div class="t lb" style="left:549.3px;top:290.00px;width:20px;text-align:center">13</div><div class="t lb" style="left:110.2px;top:268.00px;width:20px;text-align:center">14</div><div class="t lb" style="left:549.3px;top:268.00px;width:20px;text-align:center">14</div><div class="t lb" style="left:110.2px;top:246.00px;width:20px;text-align:center">15</div><div class="t lb" style="left:549.3px;top:246.00px;width:20px;text-align:center">15</div><div class="t lb" style="left:110.2px;top:224.00px;width:20px;text-align:center">16</div><div class="t lb" style="left:549.3px;top:224.00px;width:20px;text-align:center">16</div><div class="t lb" style="left:110.2px;top:202.00px;width:20px;text-align:center">17</div><div class="t lb" style="left:549.3px;top:202.00px;width:20px;text-align:center">17</div><div class="t lb" style="left:110.2px;top:180.00px;width:20px;text-align:center">18</div><div class="t lb" style="left:549.3px;top:180.00px;width:20px;text-align:center">18</div><div class="t lb" style="left:110.2px;top:158.00px;width:20px;text-align:center">19</div><div class="t lb" style="left:549.3px;top:158.00px;width:20px;text-align:center">19</div><div class="t" id="cv" style="left:683.80px;top:102.88px;font-size:14.2px;font-weight:normal;color:#3c3c3c;letter-spacing:0.624px;">Comment View</div><svg class="abs" style="left:907px;top:104px" width="11" height="11"><rect x="0.5" y="0.5" width="10" height="10" rx="2.2" fill="none" stroke="#5a5955"/><rect x="4.5" y="2.5" width="4" height="4" fill="none" stroke="#5a5955"/><rect x="2.5" y="4.5" width="4" height="4" fill="#f2f1f0" stroke="#5a5955"/></svg><svg class="abs" style="left:924px;top:104px" width="11" height="11"><rect x="0.5" y="0.5" width="10" height="10" rx="2.2" fill="none" stroke="#5a5955"/><path d="M2.9 2.9 L8.1 8.1 M8.1 2.9 L2.9 8.1" stroke="#55534f" stroke-width="2.1" fill="none"/></svg><div class="abs" style="left:682px;top:122px;width:256px;height:219px;background:#fff;border:1px solid #b7b4ae;border-right:0;border-bottom-color:#f7f6f5"></div><div class="t" id="bv" style="left:684.00px;top:352.78px;font-size:14.2px;font-weight:normal;color:#3c3c3c;letter-spacing:0.311px;">Branch View</div><svg class="abs" style="left:907px;top:354px" width="11" height="11"><rect x="0.5" y="0.5" width="10" height="10" rx="2.2" fill="none" stroke="#5a5955"/><rect x="4.5" y="2.5" width="4" height="4" fill="none" stroke="#5a5955"/><rect x="2.5" y="4.5" width="4" height="4" fill="#f2f1f0" stroke="#5a5955"/></svg><svg class="abs" style="left:924px;top:354px" width="11" height="11"><rect x="0.5" y="0.5" width="10" height="10" rx="2.2" fill="none" stroke="#5a5955"/><path d="M2.9 2.9 L8.1 8.1 M8.1 2.9 L2.9 8.1" stroke="#55534f" stroke-width="2.1" fill="none"/></svg><div class="abs" style="left:682px;top:372px;width:240px;height:218px;background:#fff;border:1px solid #aba8a3;overflow:hidden" id="list"><svg class="abs" style="left:0;top:0" width="0" height="0"><defs><radialGradient id="lw" cx="0.3" cy="0.27" r="0.86"><stop offset="0" stop-color="#fff"/><stop offset="0.2" stop-color="#f2f2f2"/><stop offset="0.42" stop-color="#d0d0d0"/><stop offset="0.62" stop-color="#a0a0a0"/><stop offset="0.8" stop-color="#5c5c5c"/><stop offset="0.92" stop-color="#2e2e2e"/><stop offset="1" stop-color="#222"/></radialGradient><radialGradient id="lb2" cx="0.32" cy="0.27" r="0.85"><stop offset="0" stop-color="#6a6a6a"/><stop offset="0.25" stop-color="#343434"/><stop offset="0.6" stop-color="#141414"/><stop offset="0.9" stop-color="#0c0c0c"/><stop offset="1" stop-color="#333"/></radialGradient><radialGradient id="lws" cx="0.3" cy="0.27" r="0.86"><stop offset="0" stop-color="#fff"/><stop offset="0.2" stop-color="#fae4da"/><stop offset="0.42" stop-color="#e6b49e"/><stop offset="0.62" stop-color="#c08468"/><stop offset="0.8" stop-color="#8a4e32"/><stop offset="0.92" stop-color="#5e2e18"/><stop offset="1" stop-color="#4a2010"/></radialGradient></defs></svg><svg class="abs" style="left:20.2px;top:1.3px" width="16" height="16"><circle cx="8" cy="8" r="7.1" fill="url(#lw)"/></svg><div class="t" id="li0" style="left:41.70px;top:3.82px;font-size:13.8px;font-weight:normal;color:#3c3c3c;letter-spacing:-0.791px;">S2</div><svg class="abs" style="left:20.2px;top:20.3px" width="16" height="16"><circle cx="8" cy="8" r="7.1" fill="url(#lb2)"/></svg><div class="t" id="li1" style="left:41.70px;top:22.82px;font-size:13.8px;font-weight:normal;color:#3c3c3c;letter-spacing:0.494px;">Q2</div><svg class="abs" style="left:20.2px;top:39.3px" width="16" height="16"><circle cx="8" cy="8" r="7.1" fill="url(#lw)"/></svg><div class="t" id="li2" style="left:41.70px;top:41.82px;font-size:13.8px;font-weight:normal;color:#3c3c3c;letter-spacing:-0.491px;">P2</div><svg class="abs" style="left:20.2px;top:58.3px" width="16" height="16"><circle cx="8" cy="8" r="7.1" fill="url(#lb2)"/></svg><div class="t" id="li3" style="left:41.70px;top:60.82px;font-size:13.8px;font-weight:normal;color:#3c3c3c;letter-spacing:-0.406px;">O1</div><svg class="abs" style="left:20.2px;top:77.3px" width="16" height="16"><circle cx="8" cy="8" r="7.1" fill="url(#lw)"/></svg><div class="t" id="li4" style="left:41.70px;top:79.82px;font-size:13.8px;font-weight:normal;color:#3c3c3c;letter-spacing:-0.791px;">S3</div><svg class="abs" style="left:20.2px;top:96.3px" width="16" height="16"><circle cx="8" cy="8" r="7.1" fill="url(#lb2)"/></svg><div class="t" id="li5" style="left:41.70px;top:98.82px;font-size:13.8px;font-weight:normal;color:#3c3c3c;letter-spacing:-1.091px;">P1</div><svg class="abs" style="left:20.2px;top:115.3px" width="16" height="16"><circle cx="8" cy="8" r="7.1" fill="url(#lw)"/></svg><div class="t" id="li6" style="left:41.70px;top:117.82px;font-size:13.8px;font-weight:normal;color:#3c3c3c;letter-spacing:-1.241px;">R9</div><svg class="abs" style="left:20.2px;top:134.3px" width="16" height="16"><circle cx="8" cy="8" r="7.1" fill="url(#lb2)"/></svg><div class="t" id="li7" style="left:41.70px;top:136.82px;font-size:13.8px;font-weight:normal;color:#3c3c3c;letter-spacing:0.711px;">Q10</div><svg class="abs" style="left:20.2px;top:153.3px" width="16" height="16"><circle cx="8" cy="8" r="7.1" fill="url(#lw)"/></svg><div class="t" id="li8" style="left:41.70px;top:155.82px;font-size:13.8px;font-weight:normal;color:#3c3c3c;letter-spacing:-0.031px;">S10</div><svg class="abs" style="left:20.2px;top:172.3px" width="16" height="16"><circle cx="8" cy="8" r="7.1" fill="url(#lb2)"/></svg><div class="t" id="li9" style="left:41.70px;top:174.82px;font-size:13.8px;font-weight:normal;color:#3c3c3c;letter-spacing:-0.166px;">S11</div><div class="abs" style="left:0;top:190.0px;width:238px;height:19px;background:linear-gradient(#f38253,#ef7645 50%,#ea6d3c)"></div><div class="abs" style="left:39px;top:190.0px;width:199px;height:19px;border:1px dotted #c9a897"></div><svg class="abs" style="left:20.2px;top:191.3px" width="16" height="16"><circle cx="8" cy="8" r="7.1" fill="url(#lws)"/></svg><div class="t" id="li10" style="left:41.70px;top:193.82px;font-size:13.8px;font-weight:normal;color:#fff;letter-spacing:-0.491px;">S9</div><svg class="abs" style="left:20.2px;top:210.3px" width="16" height="16"><circle cx="8" cy="8" r="7.1" fill="url(#lb2)"/></svg><div class="t" id="li11" style="left:41.70px;top:212.82px;font-size:13.8px;font-weight:normal;color:#3c3c3c;letter-spacing:0.261px;">Q17</div><style>.li{font-size:15px;color:#3c3c3c}</style></div><div class="abs" style="left:925px;top:373px;width:12px;height:216px;border-radius:6px;border:1px solid #b3afa9;background:#f6f5f4"></div><div class="abs" style="left:925px;top:386px;width:12px;height:190px;border:1px solid #b3afa9;border-top-color:#c5c1bc;border-radius:5px 5px 5px 5px;background:linear-gradient(90deg,#cfccc8,#e2e0dd 60%,#dddad7)"></div><div class="abs" style="left:925px;top:483px;width:12px;height:34px;border:1px solid #a09d97;border-radius:6px;background:linear-gradient(90deg,#fdfdfd,#eceae8)"></div><div class="abs" style="left:929px;top:496px;width:4px;height:7px;background:repeating-linear-gradient(#8a8782 0,#8a8782 1px,transparent 1px,transparent 3px)"></div><svg class="abs" style="left:925px;top:373px" width="12" height="13"><path d="M3.4 8.4 L6.1 5.4 L8.8 8.4 Z" fill="#6a6965"/></svg><svg class="abs" style="left:925px;top:576px" width="12" height="13"><path d="M3.4 4.4 L6.1 7.4 L8.8 4.4 Z" fill="#6a6965"/></svg><svg class="abs" style="left:676px;top:339px" width="140" height="10"><g fill="#cfccc7"><rect x="1" y="1" width="4" height="1"/><rect x="1" y="4" width="4" height="1"/><rect x="1" y="7" width="4" height="1"/><rect x="131" y="3" width="1" height="4"/><rect x="134" y="3" width="1" height="4"/><rect x="137" y="3" width="1" height="4"/></g><g fill="#fdfdfc"><rect x="1" y="2" width="4" height="1"/><rect x="1" y="5" width="4" height="1"/><rect x="1" y="8" width="4" height="1"/><rect x="132" y="3" width="1" height="4"/><rect x="135" y="3" width="1" height="4"/><rect x="138" y="3" width="1" height="4"/></g></svg><div class="abs" style="left:1px;top:590px;width:937px;height:1px;background:#cbc8c3"></div><div class="abs" style="left:2px;top:593px;width:613px;height:19px;border:1px solid #c4c1bc;box-shadow:inset 1px 1px 0 #fff, 1px 1px 0 #fff"></div><div class="abs" style="left:621px;top:593px;width:133px;height:19px;border:1px solid #c4c1bc;box-shadow:inset 1px 1px 0 #fff, 1px 1px 0 #fff"></div><div class="abs" style="left:760px;top:593px;width:154px;height:19px;border:1px solid #c4c1bc;box-shadow:inset 1px 1px 0 #fff, 1px 1px 0 #fff"></div><div class="t" id="s1" style="left:626.20px;top:596.48px;font-size:14.2px;font-weight:normal;color:#3c3c3c;letter-spacing:0.189px;">LastMove: 124(S9)</div><div class="t" id="s2" style="left:764.70px;top:596.48px;font-size:14.2px;font-weight:normal;color:#3c3c3c;letter-spacing:0.161px;">Dead: Black 2 White 0</div><svg class="abs" style="left:926px;top:601px" width="12" height="12"><rect x="0" y="9" width="2" height="2" fill="#fff"/><rect x="0" y="9" width="1" height="1" fill="#c9c6c1"/><rect x="3" y="6" width="2" height="2" fill="#fff"/><rect x="3" y="6" width="1" height="1" fill="#c9c6c1"/><rect x="3" y="9" width="2" height="2" fill="#fff"/><rect x="3" y="9" width="1" height="1" fill="#c9c6c1"/><rect x="6" y="3" width="2" height="2" fill="#fff"/><rect x="6" y="3" width="1" height="1" fill="#c9c6c1"/><rect x="6" y="6" width="2" height="2" fill="#fff"/><rect x="6" y="6" width="1" height="1" fill="#c9c6c1"/><rect x="6" y="9" width="2" height="2" fill="#fff"/><rect x="6" y="9" width="1" height="1" fill="#c9c6c1"/><rect x="9" y="0" width="2" height="2" fill="#fff"/><rect x="9" y="0" width="1" height="1" fill="#c9c6c1"/><rect x="9" y="3" width="2" height="2" fill="#fff"/><rect x="9" y="3" width="1" height="1" fill="#c9c6c1"/><rect x="9" y="6" width="2" height="2" fill="#fff"/><rect x="9" y="6" width="1" height="1" fill="#c9c6c1"/><rect x="9" y="9" width="2" height="2" fill="#fff"/><rect x="9" y="9" width="1" height="1" fill="#c9c6c1"/></svg><svg class="abs" style="left:660px;top:470px" width="30" height="34"><path d="M7.6 8 V24.6 L11.6 21 L14 26.4 Q15.4 27 16.6 26 L14.4 20.6 L19.4 20.2 Z" fill="#fff" stroke="#000" stroke-width="1.2" stroke-linejoin="miter"/></svg><svg class="abs" style="left:0;top:0;will-change:transform" width="939" height="100" viewBox="0 0 939 100"><text x="243.1" y="51" text-anchor="middle" font-family="DejaVu Sans,Liberation Sans,sans-serif" font-weight="bold" font-size="10.5" fill="#000">1</text><text x="139.2" y="87.4" text-anchor="middle" font-family="DejaVu Serif,Liberation Serif,serif" font-weight="bold" font-size="20.5" fill="#000" stroke="#000" stroke-width="0.3" stroke-linejoin="miter" textLength="15.6" lengthAdjust="spacingAndGlyphs">A</text><text x="270.5" y="84" text-anchor="middle" font-family="Liberation Sans,sans-serif" font-weight="bold" font-size="12" fill="#000">1</text><text x="604.6" y="81.6" text-anchor="middle" font-family="Liberation Sans,sans-serif" font-weight="bold" font-size="11.5" fill="#000">8</text><path d="M609.5 84.2 L612.9 87.0" stroke="#b4601c" stroke-width="2.5" stroke-linecap="round"/><circle cx="606.3" cy="81.2" r="3.9" fill="#fff" stroke="#444" stroke-width="0.6"/><circle cx="606.3" cy="81.2" r="2.9" fill="url(#lens)"/></svg></div></body></html>
